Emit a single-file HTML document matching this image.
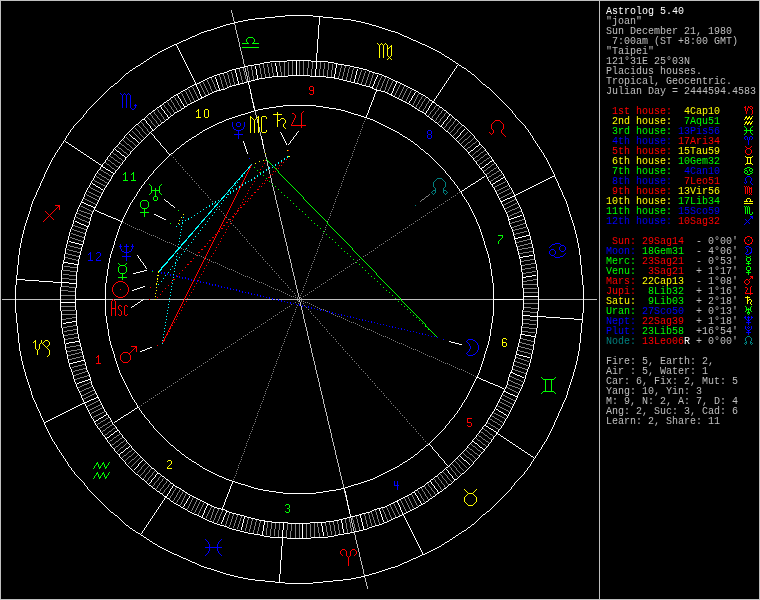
<!DOCTYPE html>
<html><head><meta charset="utf-8"><title>Astrolog 5.40</title>
<style>
html,body{margin:0;padding:0;background:#000;}
body{width:760px;height:600px;position:relative;overflow:hidden;font-family:"Liberation Mono",monospace;}
#side{will-change:transform;position:absolute;left:606px;top:7px;width:155px;font-family:"Liberation Mono",monospace;font-size:10px;line-height:10px;color:#bfbfbf;}
#side div{height:10px;white-space:pre;}
.w{color:#fff}.l{color:#bfbfbf}.r{color:#f00}.G{color:#0f0}.y{color:#ff0}.b{color:#00f}.c{color:#0ff}.C{color:#007f7f}
</style></head><body>
<svg width="760" height="600" viewBox="0 0 760 600" shape-rendering="crispEdges" style="position:absolute;left:0;top:0">
<path stroke="rgb(191,191,191)" stroke-width="1" fill="none" transform="translate(0,0.5)" d="M0 0h760M0 1h1M599 1h1M759 1h1M0 2h1M599 2h1M759 2h1M0 3h1M599 3h1M759 3h1M0 4h1M599 4h1M759 4h1M0 5h1M599 5h1M759 5h1M0 6h1M599 6h1M759 6h1M0 7h1M599 7h1M759 7h1M0 8h1M599 8h1M759 8h1M0 9h1M599 9h1M759 9h1M0 10h1M231 10h1M599 10h1M759 10h1M0 11h1M231 11h1M599 11h1M759 11h1M0 12h1M231 12h1M599 12h1M759 12h1M0 13h1M232 13h1M599 13h1M759 13h1M0 14h1M232 14h1M599 14h1M759 14h1M0 15h1M232 15h1M599 15h1M759 15h1M0 16h1M232 16h1M599 16h1M759 16h1M0 17h1M233 17h1M599 17h1M759 17h1M0 18h1M233 18h1M599 18h1M759 18h1M0 19h1M233 19h1M599 19h1M759 19h1M0 20h1M233 20h1M599 20h1M759 20h1M0 21h1M234 21h1M599 21h1M759 21h1M0 22h1M599 22h1M759 22h1M0 23h1M234 23h1M599 23h1M759 23h1M0 24h1M234 24h1M599 24h1M759 24h1M0 25h1M235 25h1M599 25h1M759 25h1M0 26h1M235 26h1M599 26h1M759 26h1M0 27h1M235 27h1M599 27h1M759 27h1M0 28h1M235 28h1M599 28h1M759 28h1M0 29h1M235 29h1M599 29h1M759 29h1M0 30h1M236 30h1M599 30h1M759 30h1M0 31h1M236 31h1M599 31h1M759 31h1M0 32h1M236 32h1M599 32h1M759 32h1M0 33h1M236 33h1M599 33h1M759 33h1M0 34h1M237 34h1M599 34h1M759 34h1M0 35h1M237 35h1M599 35h1M759 35h1M0 36h1M237 36h1M599 36h1M759 36h1M0 37h1M237 37h1M599 37h1M759 37h1M0 38h1M238 38h1M599 38h1M759 38h1M0 39h1M238 39h1M599 39h1M759 39h1M0 40h1M238 40h1M599 40h1M759 40h1M0 41h1M238 41h1M599 41h1M759 41h1M0 42h1M239 42h1M599 42h1M759 42h1M0 43h1M239 43h1M599 43h1M759 43h1M0 44h1M239 44h1M599 44h1M759 44h1M0 45h1M239 45h1M599 45h1M759 45h1M0 46h1M239 46h1M599 46h1M759 46h1M0 47h1M240 47h1M599 47h1M759 47h1M0 48h1M240 48h1M599 48h1M759 48h1M0 49h1M240 49h1M599 49h1M759 49h1M0 50h1M240 50h1M599 50h1M759 50h1M0 51h1M241 51h1M599 51h1M759 51h1M0 52h1M241 52h1M599 52h1M759 52h1M0 53h1M241 53h1M599 53h1M759 53h1M0 54h1M241 54h1M599 54h1M759 54h1M0 55h1M242 55h1M599 55h1M759 55h1M0 56h1M242 56h1M599 56h1M759 56h1M0 57h1M242 57h1M599 57h1M759 57h1M0 58h1M242 58h1M599 58h1M759 58h1M0 59h1M243 59h1M599 59h1M759 59h1M0 60h1M243 60h1M599 60h1M759 60h1M0 61h1M243 61h1M599 61h1M759 61h1M0 62h1M243 62h1M599 62h1M759 62h1M0 63h1M243 63h1M599 63h1M759 63h1M0 64h1M244 64h1M599 64h1M759 64h1M0 65h1M244 65h1M599 65h1M759 65h1M0 66h1M599 66h1M759 66h1M0 67h1M244 67h1M599 67h1M759 67h1M0 68h1M245 68h1M599 68h1M759 68h1M0 69h1M245 69h1M599 69h1M759 69h1M0 70h1M245 70h1M599 70h1M759 70h1M0 71h1M245 71h1M599 71h1M759 71h1M0 72h1M246 72h1M599 72h1M759 72h1M0 73h1M246 73h1M599 73h1M759 73h1M0 74h1M246 74h1M599 74h1M759 74h1M0 75h1M246 75h1M599 75h1M759 75h1M0 76h1M247 76h1M599 76h1M759 76h1M0 77h1M247 77h1M599 77h1M759 77h1M0 78h1M247 78h1M599 78h1M759 78h1M0 79h1M247 79h1M599 79h1M759 79h1M0 80h1M247 80h1M599 80h1M759 80h1M0 81h1M599 81h1M759 81h1M0 82h1M599 82h1M759 82h1M0 83h1M599 83h1M759 83h1M0 84h1M599 84h1M759 84h1M0 85h1M599 85h1M759 85h1M0 86h1M599 86h1M759 86h1M0 87h1M599 87h1M759 87h1M0 88h1M599 88h1M759 88h1M0 89h1M599 89h1M759 89h1M0 90h1M599 90h1M759 90h1M0 91h1M599 91h1M759 91h1M0 92h1M599 92h1M759 92h1M0 93h1M251 93h1M599 93h1M759 93h1M0 94h1M599 94h1M759 94h1M0 95h1M599 95h1M759 95h1M0 96h1M599 96h1M759 96h1M0 97h1M599 97h1M759 97h1M0 98h1M252 98h1M599 98h1M759 98h1M0 99h1M599 99h1M759 99h1M0 100h1M599 100h1M759 100h1M0 101h1M599 101h1M759 101h1M0 102h1M253 102h1M599 102h1M759 102h1M0 103h1M599 103h1M759 103h1M0 104h1M599 104h1M759 104h1M0 105h1M599 105h1M759 105h1M0 106h1M254 106h1M599 106h1M759 106h1M0 107h1M254 107h1M599 107h1M759 107h1M0 108h1M599 108h1M759 108h1M0 109h1M599 109h1M759 109h1M0 110h1M599 110h1M759 110h1M0 111h1M255 111h1M599 111h1M759 111h1M0 112h1M255 112h1M599 112h1M759 112h1M0 113h1M255 113h1M599 113h1M759 113h1M0 114h1M255 114h1M599 114h1M759 114h1M0 115h1M256 115h1M599 115h1M759 115h1M0 116h1M256 116h1M599 116h1M759 116h1M0 117h1M256 117h1M599 117h1M759 117h1M0 118h1M599 118h1M759 118h1M0 119h1M257 119h1M599 119h1M759 119h1M0 120h1M257 120h1M599 120h1M759 120h1M0 121h1M257 121h1M599 121h1M759 121h1M0 122h1M257 122h1M599 122h1M759 122h1M0 123h1M599 123h1M759 123h1M0 124h1M599 124h1M759 124h1M0 125h1M599 125h1M759 125h1M0 126h1M599 126h1M759 126h1M0 127h1M259 127h1M599 127h1M759 127h1M0 128h1M259 128h1M599 128h1M759 128h1M0 129h1M259 129h1M599 129h1M759 129h1M0 130h1M259 130h1M599 130h1M759 130h1M0 131h1M259 131h1M599 131h1M759 131h1M0 132h1M260 132h1M599 132h1M759 132h1M0 133h1M260 133h1M599 133h1M759 133h1M0 134h1M260 134h1M599 134h1M759 134h1M0 135h1M260 135h1M599 135h1M759 135h1M0 136h1M599 136h1M759 136h1M0 137h1M599 137h1M759 137h1M0 138h1M599 138h1M759 138h1M0 139h1M261 139h1M599 139h1M759 139h1M0 140h1M599 140h1M759 140h1M0 141h1M599 141h1M759 141h1M0 142h1M599 142h1M759 142h1M0 143h1M599 143h1M759 143h1M0 144h1M263 144h1M599 144h1M759 144h1M0 145h1M599 145h1M759 145h1M0 146h1M599 146h1M759 146h1M0 147h1M599 147h1M759 147h1M0 148h1M599 148h1M759 148h1M0 149h1M264 149h1M599 149h1M759 149h1M0 150h1M264 150h1M599 150h1M759 150h1M0 151h1M264 151h1M599 151h1M759 151h1M0 152h1M264 152h1M599 152h1M759 152h1M0 153h1M599 153h1M759 153h1M0 154h1M265 154h1M599 154h1M759 154h1M0 155h1M265 155h1M599 155h1M759 155h1M0 156h1M265 156h1M599 156h1M759 156h1M0 157h1M266 157h1M599 157h1M759 157h1M0 158h1M266 158h1M599 158h1M759 158h1M0 159h1M599 159h1M759 159h1M0 160h1M266 160h1M599 160h1M759 160h1M0 161h1M267 161h1M599 161h1M759 161h1M0 162h1M267 162h1M599 162h1M759 162h1M0 163h1M267 163h1M599 163h1M759 163h1M0 164h1M267 164h1M599 164h1M759 164h1M0 165h1M267 165h1M599 165h1M759 165h1M0 166h1M268 166h1M599 166h1M759 166h1M0 167h1M268 167h1M599 167h1M759 167h1M0 168h1M268 168h1M599 168h1M759 168h1M0 169h1M268 169h1M599 169h1M759 169h1M0 170h1M269 170h1M599 170h1M759 170h1M0 171h1M269 171h1M599 171h1M759 171h1M0 172h1M269 172h1M599 172h1M759 172h1M0 173h1M269 173h1M599 173h1M759 173h1M0 174h1M599 174h1M759 174h1M0 175h1M270 175h1M599 175h1M759 175h1M0 176h1M270 176h1M599 176h1M759 176h1M0 177h1M270 177h1M599 177h1M759 177h1M0 178h1M271 178h1M599 178h1M759 178h1M0 179h1M271 179h1M599 179h1M759 179h1M0 180h1M271 180h1M599 180h1M759 180h1M0 181h1M271 181h1M599 181h1M759 181h1M0 182h1M271 182h1M599 182h1M759 182h1M0 183h1M272 183h1M599 183h1M759 183h1M0 184h1M599 184h1M759 184h1M0 185h1M272 185h1M599 185h1M759 185h1M0 186h1M272 186h1M599 186h1M759 186h1M0 187h1M273 187h1M599 187h1M759 187h1M0 188h1M273 188h1M599 188h1M759 188h1M0 189h1M273 189h1M599 189h1M759 189h1M0 190h1M273 190h1M599 190h1M759 190h1M0 191h1M274 191h1M599 191h1M759 191h1M0 192h1M274 192h1M599 192h1M759 192h1M0 193h1M274 193h1M599 193h1M759 193h1M0 194h1M274 194h1M599 194h1M759 194h1M0 195h1M275 195h1M599 195h1M759 195h1M0 196h1M275 196h1M599 196h1M759 196h1M0 197h1M275 197h1M599 197h1M759 197h1M0 198h1M275 198h1M599 198h1M759 198h1M0 199h1M275 199h1M599 199h1M759 199h1M0 200h1M276 200h1M599 200h1M759 200h1M0 201h1M276 201h1M599 201h1M759 201h1M0 202h1M276 202h1M599 202h1M759 202h1M0 203h1M276 203h1M599 203h1M759 203h1M0 204h1M277 204h1M599 204h1M759 204h1M0 205h1M277 205h1M599 205h1M759 205h1M0 206h1M277 206h1M599 206h1M759 206h1M0 207h1M277 207h1M599 207h1M759 207h1M0 208h1M278 208h1M599 208h1M759 208h1M0 209h1M278 209h1M599 209h1M759 209h1M0 210h1M278 210h1M599 210h1M759 210h1M0 211h1M278 211h1M599 211h1M759 211h1M0 212h1M279 212h1M599 212h1M759 212h1M0 213h1M279 213h1M599 213h1M759 213h1M0 214h1M279 214h1M599 214h1M759 214h1M0 215h1M279 215h1M599 215h1M759 215h1M0 216h1M279 216h1M599 216h1M759 216h1M0 217h1M280 217h1M599 217h1M759 217h1M0 218h1M280 218h1M599 218h1M759 218h1M0 219h1M280 219h1M599 219h1M759 219h1M0 220h1M280 220h1M599 220h1M759 220h1M0 221h1M281 221h1M599 221h1M759 221h1M0 222h1M281 222h1M599 222h1M759 222h1M0 223h1M281 223h1M599 223h1M759 223h1M0 224h1M281 224h1M599 224h1M759 224h1M0 225h1M282 225h1M599 225h1M759 225h1M0 226h1M282 226h1M599 226h1M759 226h1M0 227h1M282 227h1M599 227h1M759 227h1M0 228h1M282 228h1M599 228h1M759 228h1M0 229h1M283 229h1M599 229h1M759 229h1M0 230h1M283 230h1M599 230h1M759 230h1M0 231h1M283 231h1M599 231h1M759 231h1M0 232h1M283 232h1M599 232h1M759 232h1M0 233h1M283 233h1M599 233h1M759 233h1M0 234h1M284 234h1M599 234h1M759 234h1M0 235h1M284 235h1M599 235h1M759 235h1M0 236h1M284 236h1M599 236h1M759 236h1M0 237h1M284 237h1M599 237h1M759 237h1M0 238h1M285 238h1M599 238h1M759 238h1M0 239h1M285 239h1M599 239h1M759 239h1M0 240h1M285 240h1M599 240h1M759 240h1M0 241h1M285 241h1M599 241h1M759 241h1M0 242h1M286 242h1M599 242h1M759 242h1M0 243h1M286 243h1M599 243h1M759 243h1M0 244h1M286 244h1M599 244h1M759 244h1M0 245h1M286 245h1M599 245h1M759 245h1M0 246h1M287 246h1M599 246h1M759 246h1M0 247h1M287 247h1M599 247h1M759 247h1M0 248h1M287 248h1M599 248h1M759 248h1M0 249h1M287 249h1M599 249h1M759 249h1M0 250h1M287 250h1M599 250h1M759 250h1M0 251h1M288 251h1M599 251h1M759 251h1M0 252h1M288 252h1M599 252h1M759 252h1M0 253h1M288 253h1M599 253h1M759 253h1M0 254h1M288 254h1M599 254h1M759 254h1M0 255h1M289 255h1M599 255h1M759 255h1M0 256h1M289 256h1M599 256h1M759 256h1M0 257h1M289 257h1M599 257h1M759 257h1M0 258h1M289 258h1M599 258h1M759 258h1M0 259h1M290 259h1M599 259h1M759 259h1M0 260h1M290 260h1M599 260h1M759 260h1M0 261h1M290 261h1M599 261h1M759 261h1M0 262h1M290 262h1M599 262h1M759 262h1M0 263h1M291 263h1M599 263h1M759 263h1M0 264h1M291 264h1M599 264h1M759 264h1M0 265h1M291 265h1M599 265h1M759 265h1M0 266h1M291 266h1M599 266h1M759 266h1M0 267h1M291 267h1M599 267h1M759 267h1M0 268h1M292 268h1M599 268h1M759 268h1M0 269h1M292 269h1M599 269h1M759 269h1M0 270h1M292 270h1M599 270h1M759 270h1M0 271h1M292 271h1M599 271h1M759 271h1M0 272h1M293 272h1M599 272h1M759 272h1M0 273h1M293 273h1M599 273h1M759 273h1M0 274h1M293 274h1M599 274h1M759 274h1M0 275h1M293 275h1M599 275h1M759 275h1M0 276h1M294 276h1M599 276h1M759 276h1M0 277h1M294 277h1M599 277h1M759 277h1M0 278h1M294 278h1M599 278h1M759 278h1M0 279h1M294 279h1M599 279h1M759 279h1M0 280h1M295 280h1M599 280h1M759 280h1M0 281h1M295 281h1M599 281h1M759 281h1M0 282h1M295 282h1M599 282h1M759 282h1M0 283h1M295 283h1M599 283h1M759 283h1M0 284h1M295 284h1M599 284h1M759 284h1M0 285h1M296 285h1M599 285h1M759 285h1M0 286h1M296 286h1M599 286h1M759 286h1M0 287h1M296 287h1M599 287h1M759 287h1M0 288h1M296 288h1M599 288h1M759 288h1M0 289h1M297 289h1M599 289h1M759 289h1M0 290h1M297 290h1M599 290h1M759 290h1M0 291h1M297 291h1M599 291h1M759 291h1M0 292h1M297 292h1M599 292h1M759 292h1M0 293h1M298 293h1M599 293h1M759 293h1M0 294h1M298 294h1M599 294h1M759 294h1M0 295h1M298 295h1M599 295h1M759 295h1M0 296h1M298 296h1M599 296h1M759 296h1M0 297h1M299 297h1M599 297h1M759 297h1M0 298h1M299 298h1M599 298h1M759 298h1M0 299h1M2 299h13M16 299h44M106 299h7M114 299h29M144 299h5M150 299h5M156 299h28M185 299h87M273 299h2M276 299h2M279 299h20M300 299h100M401 299h92M539 299h44M584 299h13M599 299h1M759 299h1M0 300h1M299 300h1M599 300h1M759 300h1M0 301h1M299 301h1M599 301h1M759 301h1M0 302h1M300 302h1M599 302h1M759 302h1M0 303h1M300 303h1M599 303h1M759 303h1M0 304h1M300 304h1M599 304h1M759 304h1M0 305h1M300 305h1M599 305h1M759 305h1M0 306h1M301 306h1M599 306h1M759 306h1M0 307h1M301 307h1M599 307h1M759 307h1M0 308h1M301 308h1M599 308h1M759 308h1M0 309h1M301 309h1M599 309h1M759 309h1M0 310h1M302 310h1M599 310h1M759 310h1M0 311h1M302 311h1M599 311h1M759 311h1M0 312h1M302 312h1M599 312h1M759 312h1M0 313h1M302 313h1M599 313h1M759 313h1M0 314h1M303 314h1M599 314h1M759 314h1M0 315h1M303 315h1M599 315h1M759 315h1M0 316h1M303 316h1M599 316h1M759 316h1M0 317h1M303 317h1M599 317h1M759 317h1M0 318h1M303 318h1M599 318h1M759 318h1M0 319h1M304 319h1M599 319h1M759 319h1M0 320h1M304 320h1M599 320h1M759 320h1M0 321h1M304 321h1M599 321h1M759 321h1M0 322h1M304 322h1M599 322h1M759 322h1M0 323h1M305 323h1M599 323h1M759 323h1M0 324h1M305 324h1M599 324h1M759 324h1M0 325h1M305 325h1M599 325h1M759 325h1M0 326h1M305 326h1M599 326h1M759 326h1M0 327h1M306 327h1M599 327h1M759 327h1M0 328h1M306 328h1M599 328h1M759 328h1M0 329h1M306 329h1M599 329h1M759 329h1M0 330h1M306 330h1M599 330h1M759 330h1M0 331h1M307 331h1M599 331h1M759 331h1M0 332h1M307 332h1M599 332h1M759 332h1M0 333h1M307 333h1M599 333h1M759 333h1M0 334h1M307 334h1M599 334h1M759 334h1M0 335h1M307 335h1M599 335h1M759 335h1M0 336h1M308 336h1M599 336h1M759 336h1M0 337h1M308 337h1M599 337h1M759 337h1M0 338h1M308 338h1M599 338h1M759 338h1M0 339h1M308 339h1M599 339h1M759 339h1M0 340h1M309 340h1M599 340h1M759 340h1M0 341h1M309 341h1M599 341h1M759 341h1M0 342h1M309 342h1M599 342h1M759 342h1M0 343h1M309 343h1M599 343h1M759 343h1M0 344h1M310 344h1M599 344h1M759 344h1M0 345h1M310 345h1M599 345h1M759 345h1M0 346h1M310 346h1M599 346h1M759 346h1M0 347h1M310 347h1M599 347h1M759 347h1M0 348h1M311 348h1M599 348h1M759 348h1M0 349h1M311 349h1M599 349h1M759 349h1M0 350h1M311 350h1M599 350h1M759 350h1M0 351h1M311 351h1M599 351h1M759 351h1M0 352h1M311 352h1M599 352h1M759 352h1M0 353h1M312 353h1M599 353h1M759 353h1M0 354h1M312 354h1M599 354h1M759 354h1M0 355h1M312 355h1M599 355h1M759 355h1M0 356h1M312 356h1M599 356h1M759 356h1M0 357h1M313 357h1M599 357h1M759 357h1M0 358h1M313 358h1M599 358h1M759 358h1M0 359h1M313 359h1M599 359h1M759 359h1M0 360h1M313 360h1M599 360h1M759 360h1M0 361h1M314 361h1M599 361h1M759 361h1M0 362h1M314 362h1M599 362h1M759 362h1M0 363h1M314 363h1M599 363h1M759 363h1M0 364h1M314 364h1M599 364h1M759 364h1M0 365h1M315 365h1M599 365h1M759 365h1M0 366h1M315 366h1M599 366h1M759 366h1M0 367h1M315 367h1M599 367h1M759 367h1M0 368h1M315 368h1M599 368h1M759 368h1M0 369h1M315 369h1M599 369h1M759 369h1M0 370h1M316 370h1M599 370h1M759 370h1M0 371h1M316 371h1M599 371h1M759 371h1M0 372h1M316 372h1M599 372h1M759 372h1M0 373h1M316 373h1M599 373h1M759 373h1M0 374h1M317 374h1M599 374h1M759 374h1M0 375h1M317 375h1M599 375h1M759 375h1M0 376h1M317 376h1M599 376h1M759 376h1M0 377h1M317 377h1M599 377h1M759 377h1M0 378h1M318 378h1M599 378h1M759 378h1M0 379h1M318 379h1M599 379h1M759 379h1M0 380h1M318 380h1M599 380h1M759 380h1M0 381h1M318 381h1M599 381h1M759 381h1M0 382h1M319 382h1M599 382h1M759 382h1M0 383h1M319 383h1M599 383h1M759 383h1M0 384h1M319 384h1M599 384h1M759 384h1M0 385h1M319 385h1M599 385h1M759 385h1M0 386h1M319 386h1M599 386h1M759 386h1M0 387h1M320 387h1M599 387h1M759 387h1M0 388h1M320 388h1M599 388h1M759 388h1M0 389h1M320 389h1M599 389h1M759 389h1M0 390h1M320 390h1M599 390h1M759 390h1M0 391h1M321 391h1M599 391h1M759 391h1M0 392h1M321 392h1M599 392h1M759 392h1M0 393h1M321 393h1M599 393h1M759 393h1M0 394h1M321 394h1M599 394h1M759 394h1M0 395h1M322 395h1M599 395h1M759 395h1M0 396h1M322 396h1M599 396h1M759 396h1M0 397h1M322 397h1M599 397h1M759 397h1M0 398h1M322 398h1M599 398h1M759 398h1M0 399h1M323 399h1M599 399h1M759 399h1M0 400h1M323 400h1M599 400h1M759 400h1M0 401h1M323 401h1M599 401h1M759 401h1M0 402h1M323 402h1M599 402h1M759 402h1M0 403h1M323 403h1M599 403h1M759 403h1M0 404h1M324 404h1M599 404h1M759 404h1M0 405h1M324 405h1M599 405h1M759 405h1M0 406h1M324 406h1M599 406h1M759 406h1M0 407h1M324 407h1M599 407h1M759 407h1M0 408h1M325 408h1M599 408h1M759 408h1M0 409h1M325 409h1M599 409h1M759 409h1M0 410h1M325 410h1M599 410h1M759 410h1M0 411h1M325 411h1M599 411h1M759 411h1M0 412h1M326 412h1M599 412h1M759 412h1M0 413h1M326 413h1M599 413h1M759 413h1M0 414h1M326 414h1M599 414h1M759 414h1M0 415h1M326 415h1M599 415h1M759 415h1M0 416h1M327 416h1M599 416h1M759 416h1M0 417h1M327 417h1M599 417h1M759 417h1M0 418h1M327 418h1M599 418h1M759 418h1M0 419h1M327 419h1M599 419h1M759 419h1M0 420h1M327 420h1M599 420h1M759 420h1M0 421h1M328 421h1M599 421h1M759 421h1M0 422h1M328 422h1M599 422h1M759 422h1M0 423h1M328 423h1M599 423h1M759 423h1M0 424h1M328 424h1M599 424h1M759 424h1M0 425h1M329 425h1M599 425h1M759 425h1M0 426h1M329 426h1M599 426h1M759 426h1M0 427h1M329 427h1M599 427h1M759 427h1M0 428h1M329 428h1M599 428h1M759 428h1M0 429h1M330 429h1M599 429h1M759 429h1M0 430h1M330 430h1M599 430h1M759 430h1M0 431h1M330 431h1M599 431h1M759 431h1M0 432h1M330 432h1M599 432h1M759 432h1M0 433h1M331 433h1M599 433h1M759 433h1M0 434h1M331 434h1M599 434h1M759 434h1M0 435h1M331 435h1M599 435h1M759 435h1M0 436h1M331 436h1M599 436h1M759 436h1M0 437h1M331 437h1M599 437h1M759 437h1M0 438h1M332 438h1M599 438h1M759 438h1M0 439h1M332 439h1M599 439h1M759 439h1M0 440h1M332 440h1M599 440h1M759 440h1M0 441h1M332 441h1M599 441h1M759 441h1M0 442h1M333 442h1M599 442h1M759 442h1M0 443h1M333 443h1M599 443h1M759 443h1M0 444h1M333 444h1M599 444h1M759 444h1M0 445h1M333 445h1M599 445h1M759 445h1M0 446h1M334 446h1M599 446h1M759 446h1M0 447h1M334 447h1M599 447h1M759 447h1M0 448h1M334 448h1M599 448h1M759 448h1M0 449h1M334 449h1M599 449h1M759 449h1M0 450h1M335 450h1M599 450h1M759 450h1M0 451h1M335 451h1M599 451h1M759 451h1M0 452h1M335 452h1M599 452h1M759 452h1M0 453h1M335 453h1M599 453h1M759 453h1M0 454h1M335 454h1M599 454h1M759 454h1M0 455h1M336 455h1M599 455h1M759 455h1M0 456h1M336 456h1M599 456h1M759 456h1M0 457h1M336 457h1M599 457h1M759 457h1M0 458h1M336 458h1M599 458h1M759 458h1M0 459h1M337 459h1M599 459h1M759 459h1M0 460h1M337 460h1M599 460h1M759 460h1M0 461h1M337 461h1M599 461h1M759 461h1M0 462h1M337 462h1M599 462h1M759 462h1M0 463h1M338 463h1M599 463h1M759 463h1M0 464h1M338 464h1M599 464h1M759 464h1M0 465h1M338 465h1M599 465h1M759 465h1M0 466h1M338 466h1M599 466h1M759 466h1M0 467h1M339 467h1M599 467h1M759 467h1M0 468h1M339 468h1M599 468h1M759 468h1M0 469h1M339 469h1M599 469h1M759 469h1M0 470h1M339 470h1M599 470h1M759 470h1M0 471h1M339 471h1M599 471h1M759 471h1M0 472h1M340 472h1M599 472h1M759 472h1M0 473h1M340 473h1M599 473h1M759 473h1M0 474h1M340 474h1M599 474h1M759 474h1M0 475h1M340 475h1M599 475h1M759 475h1M0 476h1M341 476h1M599 476h1M759 476h1M0 477h1M341 477h1M599 477h1M759 477h1M0 478h1M341 478h1M599 478h1M759 478h1M0 479h1M341 479h1M599 479h1M759 479h1M0 480h1M342 480h1M599 480h1M759 480h1M0 481h1M342 481h1M599 481h1M759 481h1M0 482h1M342 482h1M599 482h1M759 482h1M0 483h1M342 483h1M599 483h1M759 483h1M0 484h1M343 484h1M599 484h1M759 484h1M0 485h1M343 485h1M599 485h1M759 485h1M0 486h1M343 486h1M599 486h1M759 486h1M0 487h1M343 487h1M599 487h1M759 487h1M0 488h1M599 488h1M759 488h1M0 489h1M599 489h1M759 489h1M0 490h1M599 490h1M759 490h1M0 491h1M344 491h1M599 491h1M759 491h1M0 492h1M344 492h1M599 492h1M759 492h1M0 493h1M599 493h1M759 493h1M0 494h1M599 494h1M759 494h1M0 495h1M345 495h1M599 495h1M759 495h1M0 496h1M345 496h1M599 496h1M759 496h1M0 497h1M599 497h1M759 497h1M0 498h1M599 498h1M759 498h1M0 499h1M599 499h1M759 499h1M0 500h1M346 500h1M599 500h1M759 500h1M0 501h1M599 501h1M759 501h1M0 502h1M599 502h1M759 502h1M0 503h1M599 503h1M759 503h1M0 504h1M599 504h1M759 504h1M0 505h1M347 505h1M599 505h1M759 505h1M0 506h1M599 506h1M759 506h1M0 507h1M599 507h1M759 507h1M0 508h1M599 508h1M759 508h1M0 509h1M348 509h1M599 509h1M759 509h1M0 510h1M599 510h1M759 510h1M0 511h1M599 511h1M759 511h1M0 512h1M599 512h1M759 512h1M0 513h1M599 513h1M759 513h1M0 514h1M599 514h1M759 514h1M0 515h1M599 515h1M759 515h1M0 516h1M599 516h1M759 516h1M0 517h1M599 517h1M759 517h1M0 518h1M351 518h1M599 518h1M759 518h1M0 519h1M351 519h1M599 519h1M759 519h1M0 520h1M351 520h1M599 520h1M759 520h1M0 521h1M351 521h1M599 521h1M759 521h1M0 522h1M351 522h1M599 522h1M759 522h1M0 523h1M352 523h1M599 523h1M759 523h1M0 524h1M352 524h1M599 524h1M759 524h1M0 525h1M352 525h1M599 525h1M759 525h1M0 526h1M352 526h1M599 526h1M759 526h1M0 527h1M353 527h1M599 527h1M759 527h1M0 528h1M353 528h1M599 528h1M759 528h1M0 529h1M353 529h1M599 529h1M759 529h1M0 530h1M353 530h1M599 530h1M759 530h1M0 531h1M599 531h1M759 531h1M0 532h1M354 532h1M599 532h1M759 532h1M0 533h1M354 533h1M599 533h1M759 533h1M0 534h1M354 534h1M599 534h1M759 534h1M0 535h1M355 535h1M599 535h1M759 535h1M0 536h1M355 536h1M599 536h1M759 536h1M0 537h1M355 537h1M599 537h1M759 537h1M0 538h1M355 538h1M599 538h1M759 538h1M0 539h1M355 539h1M599 539h1M759 539h1M0 540h1M356 540h1M599 540h1M759 540h1M0 541h1M356 541h1M599 541h1M759 541h1M0 542h1M356 542h1M599 542h1M759 542h1M0 543h1M356 543h1M599 543h1M759 543h1M0 544h1M357 544h1M599 544h1M759 544h1M0 545h1M357 545h1M599 545h1M759 545h1M0 546h1M357 546h1M599 546h1M759 546h1M0 547h1M357 547h1M599 547h1M759 547h1M0 548h1M358 548h1M599 548h1M759 548h1M0 549h1M358 549h1M599 549h1M759 549h1M0 550h1M358 550h1M599 550h1M759 550h1M0 551h1M358 551h1M599 551h1M759 551h1M0 552h1M359 552h1M599 552h1M759 552h1M0 553h1M359 553h1M599 553h1M759 553h1M0 554h1M359 554h1M599 554h1M759 554h1M0 555h1M359 555h1M599 555h1M759 555h1M0 556h1M359 556h1M599 556h1M759 556h1M0 557h1M360 557h1M599 557h1M759 557h1M0 558h1M360 558h1M599 558h1M759 558h1M0 559h1M360 559h1M599 559h1M759 559h1M0 560h1M360 560h1M599 560h1M759 560h1M0 561h1M361 561h1M599 561h1M759 561h1M0 562h1M361 562h1M599 562h1M759 562h1M0 563h1M361 563h1M599 563h1M759 563h1M0 564h1M361 564h1M599 564h1M759 564h1M0 565h1M362 565h1M599 565h1M759 565h1M0 566h1M362 566h1M599 566h1M759 566h1M0 567h1M362 567h1M599 567h1M759 567h1M0 568h1M362 568h1M599 568h1M759 568h1M0 569h1M363 569h1M599 569h1M759 569h1M0 570h1M363 570h1M599 570h1M759 570h1M0 571h1M363 571h1M599 571h1M759 571h1M0 572h1M363 572h1M599 572h1M759 572h1M0 573h1M363 573h1M599 573h1M759 573h1M0 574h1M364 574h1M599 574h1M759 574h1M0 575h1M364 575h1M599 575h1M759 575h1M0 576h1M599 576h1M759 576h1M0 577h1M364 577h1M599 577h1M759 577h1M0 578h1M365 578h1M599 578h1M759 578h1M0 579h1M365 579h1M599 579h1M759 579h1M0 580h1M365 580h1M599 580h1M759 580h1M0 581h1M365 581h1M599 581h1M759 581h1M0 582h1M366 582h1M599 582h1M759 582h1M0 583h1M366 583h1M599 583h1M759 583h1M0 584h1M366 584h1M599 584h1M759 584h1M0 585h1M366 585h1M599 585h1M759 585h1M0 586h1M367 586h1M599 586h1M759 586h1M0 587h1M367 587h1M599 587h1M759 587h1M0 588h1M367 588h1M599 588h1M759 588h1M0 589h1M599 589h1M759 589h1M0 590h1M599 590h1M759 590h1M0 591h1M599 591h1M759 591h1M0 592h1M599 592h1M759 592h1M0 593h1M599 593h1M759 593h1M0 594h1M599 594h1M759 594h1M0 595h1M599 595h1M759 595h1M0 596h1M599 596h1M759 596h1M0 597h1M599 597h1M759 597h1M0 598h1M599 598h1M759 598h1M0 599h760"/>
<path stroke="rgb(255,255,255)" stroke-width="1" fill="none" transform="translate(0,0.5)" d="M285 15h28M275 16h10M313 16h10M265 17h10M319 17h1M323 17h10M255 18h10M319 18h1M333 18h10M248 19h7M319 19h1M343 19h8M243 20h5M319 20h1M351 20h5M238 21h5M319 21h1M356 21h5M234 22h4M319 22h1M361 22h4M230 23h4M319 23h1M365 23h4M226 24h4M319 24h1M369 24h3M223 25h3M318 25h1M372 25h4M220 26h3M318 26h1M376 26h3M217 27h3M318 27h1M379 27h3M214 28h3M318 28h1M382 28h3M211 29h3M318 29h1M385 29h3M207 30h4M318 30h1M388 30h3M204 31h3M318 31h1M391 31h4M201 32h3M318 32h1M395 32h3M199 33h2M318 33h1M398 33h2M197 34h2M318 34h1M400 34h2M195 35h2M318 35h1M402 35h2M192 36h3M318 36h1M404 36h3M190 37h2M318 37h1M407 37h2M188 38h2M318 38h1M409 38h2M186 39h2M317 39h1M411 39h2M183 40h3M317 40h1M413 40h3M181 41h2M317 41h1M416 41h2M179 42h2M317 42h1M418 42h2M177 43h2M317 43h1M420 43h2M174 44h3M317 44h1M422 44h3M172 45h2M176 45h1M317 45h1M425 45h2M170 46h2M177 46h1M317 46h1M427 46h2M168 47h2M177 47h1M317 47h1M429 47h2M166 48h2M178 48h1M317 48h1M431 48h2M164 49h2M178 49h1M317 49h1M433 49h2M162 50h2M179 50h1M317 50h1M435 50h2M160 51h2M179 51h1M317 51h1M437 51h2M158 52h2M180 52h1M317 52h1M439 52h2M157 53h1M180 53h1M316 53h1M441 53h1M155 54h2M181 54h1M316 54h1M442 54h2M153 55h2M181 55h1M316 55h1M444 55h1M152 56h1M182 56h1M316 56h1M445 56h2M150 57h2M182 57h1M316 57h1M447 57h2M149 58h1M183 58h1M316 58h1M449 58h1M147 59h2M183 59h1M316 59h1M450 59h2M146 60h1M184 60h1M287 60h24M316 60h1M452 60h1M144 61h2M184 61h1M270 61h17M296 61h1M311 61h17M453 61h2M143 62h1M185 62h1M264 62h6M296 62h1M316 62h1M328 62h6M455 62h1M141 63h2M185 63h1M260 63h4M275 63h1M296 63h1M316 63h1M334 63h4M456 63h2M140 64h1M186 64h1M254 64h6M275 64h1M296 64h1M316 64h1M336 64h1M338 64h6M458 64h1M138 65h2M186 65h1M248 65h6M275 65h1M296 65h1M316 65h1M336 65h1M344 65h6M457 65h1M459 65h2M136 66h2M187 66h1M244 66h4M255 66h1M276 66h1M296 66h1M316 66h1M336 66h1M350 66h4M456 66h1M461 66h1M135 67h1M187 67h1M240 67h4M255 67h1M276 67h1M296 67h1M316 67h1M336 67h1M354 67h5M456 67h1M462 67h2M133 68h2M188 68h1M236 68h4M255 68h1M276 68h1M296 68h1M316 68h1M335 68h1M359 68h4M455 68h1M464 68h2M132 69h1M188 69h1M232 69h4M256 69h1M276 69h1M296 69h1M315 69h1M335 69h1M357 69h1M363 69h4M454 69h1M466 69h1M130 70h2M189 70h1M229 70h3M235 70h1M256 70h1M276 70h1M296 70h1M315 70h1M335 70h1M357 70h1M367 70h2M454 70h1M467 70h1M129 71h1M189 71h1M227 71h2M235 71h1M256 71h1M276 71h1M296 71h1M315 71h1M335 71h1M356 71h1M369 71h3M453 71h1M468 71h2M128 72h1M190 72h1M224 72h3M235 72h1M256 72h1M277 72h1M296 72h1M315 72h1M335 72h1M356 72h1M372 72h3M452 72h1M470 72h1M126 73h2M190 73h1M220 73h4M236 73h1M256 73h1M277 73h1M296 73h1M315 73h1M335 73h1M356 73h1M375 73h4M452 73h1M471 73h1M125 74h1M191 74h1M217 74h3M236 74h1M256 74h1M277 74h1M296 74h1M315 74h1M334 74h1M356 74h1M379 74h3M451 74h1M472 74h2M124 75h1M191 75h1M214 75h3M236 75h1M257 75h1M277 75h1M288 75h22M315 75h1M334 75h1M355 75h1M377 75h1M382 75h2M450 75h1M474 75h1M123 76h1M192 76h1M212 76h2M236 76h1M257 76h1M272 76h16M310 76h16M334 76h1M355 76h1M377 76h1M384 76h3M450 76h1M475 76h1M122 77h1M192 77h1M209 77h3M215 77h1M237 77h1M257 77h1M265 77h7M326 77h9M355 77h1M376 77h1M387 77h2M449 77h1M476 77h1M121 78h1M193 78h1M207 78h2M215 78h1M237 78h1M257 78h1M259 78h6M334 78h5M355 78h1M376 78h1M389 78h2M448 78h1M477 78h1M120 79h1M193 79h1M205 79h2M216 79h1M237 79h1M255 79h4M339 79h4M354 79h1M375 79h1M391 79h2M448 79h1M478 79h1M119 80h1M194 80h1M203 80h2M216 80h1M237 80h1M251 80h4M343 80h4M354 80h1M375 80h1M393 80h2M447 80h1M479 80h1M118 81h1M194 81h1M201 81h2M216 81h1M238 81h1M247 81h4M347 81h4M354 81h1M374 81h1M395 81h3M446 81h1M480 81h1M117 82h1M195 82h1M199 82h2M217 82h1M238 82h1M244 82h3M248 82h1M351 82h4M374 82h1M396 82h1M398 82h2M446 82h1M481 82h1M115 83h2M195 83h1M197 83h2M217 83h1M238 83h1M240 83h4M248 83h1M355 83h4M374 83h1M396 83h1M400 83h2M445 83h1M482 83h1M114 84h1M194 84h3M217 84h1M236 84h4M248 84h1M359 84h3M373 84h1M395 84h1M402 84h2M444 84h1M483 84h2M113 85h1M192 85h2M196 85h1M218 85h1M232 85h4M249 85h1M362 85h4M373 85h1M395 85h1M404 85h2M444 85h1M485 85h1M111 86h2M190 86h2M196 86h1M218 86h1M229 86h3M249 86h1M366 86h4M372 86h1M394 86h1M406 86h2M443 86h1M486 86h1M110 87h1M188 87h2M197 87h1M218 87h1M227 87h2M249 87h1M370 87h3M394 87h1M408 87h2M442 87h1M487 87h2M109 88h1M187 88h1M197 88h1M219 88h1M225 88h2M249 88h1M372 88h2M393 88h1M410 88h2M442 88h1M489 88h1M108 89h1M185 89h2M198 89h1M219 89h1M221 89h4M250 89h1M374 89h3M393 89h1M412 89h2M441 89h1M490 89h1M107 90h1M183 90h2M198 90h1M217 90h4M250 90h1M376 90h5M393 90h1M414 90h2M440 90h1M491 90h1M106 91h1M181 91h2M199 91h1M214 91h3M250 91h1M376 91h1M381 91h4M392 91h1M416 91h2M440 91h1M492 91h1M105 92h1M180 92h1M199 92h1M212 92h2M250 92h1M375 92h1M385 92h2M392 92h1M415 92h1M418 92h1M439 92h1M493 92h1M104 93h1M178 93h2M199 93h1M210 93h2M250 93h1M375 93h1M387 93h2M391 93h1M414 93h1M419 93h2M438 93h1M494 93h1M103 94h1M176 94h2M200 94h1M208 94h2M251 94h1M374 94h1M389 94h3M414 94h1M421 94h2M438 94h1M495 94h1M102 95h1M174 95h2M177 95h1M200 95h1M206 95h2M251 95h1M374 95h1M391 95h2M413 95h1M423 95h2M437 95h1M496 95h1M101 96h1M173 96h1M178 96h1M201 96h1M204 96h2M251 96h1M374 96h1M393 96h2M412 96h1M425 96h1M436 96h1M497 96h1M100 97h1M171 97h2M178 97h1M201 97h3M251 97h1M373 97h1M395 97h2M412 97h1M426 97h2M436 97h1M498 97h1M99 98h1M170 98h1M179 98h1M200 98h2M251 98h1M373 98h1M397 98h2M411 98h1M428 98h1M435 98h1M499 98h1M98 99h1M169 99h1M180 99h1M198 99h2M252 99h1M373 99h1M399 99h2M411 99h1M429 99h1M434 99h1M500 99h1M97 100h1M167 100h2M180 100h1M196 100h2M252 100h1M372 100h1M401 100h2M410 100h1M430 100h2M434 100h1M501 100h1M96 101h1M166 101h1M181 101h1M194 101h2M252 101h1M372 101h1M403 101h2M409 101h1M432 101h2M502 101h1M95 102h1M164 102h2M181 102h1M192 102h2M252 102h1M371 102h1M405 102h2M409 102h1M432 102h3M503 102h1M94 103h1M163 103h1M182 103h1M190 103h2M253 103h1M371 103h1M407 103h2M431 103h1M435 103h1M504 103h1M93 104h1M162 104h1M183 104h1M188 104h2M253 104h1M371 104h1M409 104h2M431 104h1M436 104h1M505 104h1M92 105h1M160 105h2M183 105h1M187 105h1M253 105h1M283 105h33M370 105h1M411 105h1M430 105h1M437 105h2M506 105h1M91 106h1M159 106h2M184 106h3M253 106h1M276 106h7M316 106h7M370 106h1M412 106h2M429 106h1M439 106h1M507 106h1M90 107h1M157 107h2M161 107h1M184 107h1M253 107h1M269 107h7M323 107h6M369 107h1M414 107h1M429 107h1M440 107h2M508 107h1M89 108h1M156 108h1M161 108h1M182 108h2M254 108h1M263 108h6M329 108h7M369 108h1M415 108h2M428 108h1M442 108h1M509 108h1M88 109h1M155 109h1M162 109h1M181 109h1M254 109h1M258 109h5M336 109h5M369 109h1M417 109h1M428 109h1M443 109h1M510 109h1M87 110h1M153 110h2M163 110h1M179 110h2M254 110h4M341 110h4M368 110h1M418 110h2M427 110h1M444 110h2M511 110h1M86 111h1M152 111h1M164 111h1M177 111h2M251 111h3M345 111h3M368 111h1M420 111h2M426 111h1M446 111h1M512 111h1M86 112h1M151 112h1M164 112h1M175 112h2M248 112h3M348 112h3M368 112h1M422 112h2M426 112h1M447 112h1M512 112h1M85 113h1M149 113h2M165 113h1M174 113h1M245 113h3M351 113h3M367 113h1M424 113h2M448 113h1M513 113h1M84 114h1M148 114h1M166 114h1M173 114h1M241 114h4M354 114h4M367 114h1M425 114h1M449 114h2M514 114h1M83 115h1M147 115h1M167 115h1M171 115h2M238 115h3M358 115h3M366 115h1M426 115h1M449 115h1M451 115h1M515 115h1M83 116h1M146 116h1M167 116h1M170 116h1M235 116h3M361 116h3M366 116h1M427 116h2M448 116h1M452 116h1M515 116h1M82 117h1M145 117h1M168 117h2M232 117h3M364 117h3M429 117h1M447 117h1M453 117h1M516 117h1M81 118h1M144 118h1M168 118h1M229 118h3M367 118h3M430 118h1M447 118h1M454 118h1M517 118h1M80 119h1M142 119h3M166 119h2M226 119h3M370 119h3M431 119h2M446 119h1M455 119h2M518 119h1M79 120h1M141 120h1M145 120h1M165 120h1M224 120h2M373 120h2M433 120h1M445 120h1M457 120h1M519 120h1M78 121h1M140 121h1M146 121h1M164 121h1M222 121h2M375 121h2M434 121h1M444 121h1M458 121h1M520 121h1M77 122h1M139 122h1M146 122h1M162 122h2M219 122h3M377 122h2M435 122h2M443 122h1M459 122h1M521 122h1M76 123h1M138 123h1M147 123h1M161 123h1M217 123h2M379 123h2M437 123h1M443 123h1M460 123h1M522 123h1M75 124h1M136 124h2M148 124h1M160 124h1M215 124h2M381 124h2M438 124h1M442 124h1M461 124h1M523 124h1M74 125h1M135 125h1M149 125h1M158 125h2M213 125h2M383 125h2M439 125h1M441 125h1M462 125h2M524 125h1M73 126h1M134 126h1M150 126h1M157 126h1M211 126h2M385 126h2M440 126h2M464 126h1M525 126h1M73 127h1M133 127h1M150 127h1M156 127h1M209 127h2M387 127h2M442 127h1M465 127h1M525 127h1M72 128h1M132 128h1M151 128h1M155 128h1M207 128h2M389 128h2M443 128h1M466 128h1M526 128h1M71 129h1M131 129h1M152 129h1M154 129h1M205 129h2M391 129h2M444 129h1M464 129h1M467 129h1M527 129h1M70 130h1M130 130h1M152 130h2M203 130h2M393 130h2M445 130h1M463 130h1M468 130h1M528 130h1M70 131h1M129 131h1M151 131h1M202 131h1M298 131h1M395 131h2M446 131h2M462 131h1M469 131h1M528 131h1M69 132h1M128 132h1M150 132h1M200 132h2M280 132h1M297 132h1M397 132h2M448 132h1M461 132h1M470 132h1M529 132h1M68 133h1M127 133h1M149 133h1M151 133h1M199 133h1M281 133h1M296 133h1M399 133h1M449 133h1M460 133h1M471 133h1M530 133h1M68 134h1M126 134h1M129 134h1M148 134h1M152 134h1M197 134h2M281 134h1M296 134h1M400 134h2M450 134h1M460 134h1M472 134h1M530 134h1M67 135h1M125 135h1M130 135h1M147 135h1M153 135h1M196 135h1M282 135h1M295 135h1M402 135h1M451 135h1M459 135h1M473 135h1M531 135h1M66 136h1M124 136h1M131 136h1M146 136h1M154 136h1M194 136h2M261 136h1M282 136h1M294 136h1M403 136h2M452 136h1M458 136h1M474 136h1M532 136h1M66 137h1M124 137h1M132 137h1M145 137h1M154 137h1M192 137h2M261 137h1M283 137h1M293 137h1M405 137h2M453 137h1M457 137h1M474 137h1M532 137h1M65 138h1M123 138h1M133 138h2M144 138h1M155 138h1M191 138h1M261 138h1M283 138h1M293 138h1M407 138h1M454 138h1M456 138h1M475 138h1M533 138h1M65 139h1M122 139h1M135 139h1M143 139h1M156 139h1M189 139h2M262 139h1M284 139h1M292 139h1M408 139h2M455 139h1M476 139h1M533 139h1M64 140h1M121 140h1M136 140h1M142 140h1M157 140h1M188 140h1M262 140h1M284 140h1M291 140h1M410 140h1M456 140h1M477 140h1M534 140h1M63 141h1M65 141h1M120 141h1M137 141h1M141 141h1M158 141h1M186 141h2M243 141h1M262 141h1M285 141h1M290 141h1M411 141h2M457 141h1M478 141h1M535 141h1M63 142h1M66 142h2M119 142h1M138 142h1M140 142h1M159 142h1M185 142h1M243 142h1M262 142h1M285 142h1M290 142h1M413 142h1M458 142h1M479 142h1M535 142h1M62 143h1M68 143h1M119 143h1M139 143h1M160 143h1M184 143h1M244 143h1M262 143h1M286 143h1M289 143h1M414 143h1M459 143h1M479 143h1M536 143h1M61 144h1M69 144h2M118 144h1M138 144h1M160 144h1M182 144h2M244 144h1M262 144h1M286 144h1M288 144h1M415 144h2M460 144h1M479 144h2M537 144h1M61 145h1M71 145h1M117 145h1M137 145h1M161 145h1M181 145h1M244 145h1M263 145h1M417 145h1M461 145h1M478 145h1M481 145h1M537 145h1M60 146h1M72 146h2M116 146h1M136 146h1M162 146h1M180 146h1M245 146h1M263 146h1M418 146h1M462 146h1M476 146h2M482 146h1M538 146h1M59 147h1M74 147h1M115 147h1M135 147h1M163 147h1M179 147h1M245 147h1M263 147h1M419 147h1M463 147h1M475 147h1M483 147h1M539 147h1M59 148h1M75 148h2M114 148h1M134 148h1M164 148h1M177 148h2M245 148h1M263 148h1M420 148h1M464 148h1M474 148h1M484 148h1M539 148h1M58 149h1M77 149h1M113 149h1M115 149h1M133 149h1M165 149h1M176 149h1M246 149h1M421 149h2M465 149h1M473 149h1M485 149h1M540 149h1M57 150h1M78 150h2M113 150h1M116 150h1M132 150h1M166 150h1M175 150h1M246 150h1M423 150h1M466 150h1M471 150h2M485 150h1M541 150h1M57 151h1M80 151h1M112 151h1M117 151h2M131 151h1M166 151h1M174 151h1M246 151h1M424 151h1M467 151h1M470 151h1M486 151h1M541 151h1M56 152h1M81 152h2M111 152h1M119 152h1M130 152h1M167 152h1M173 152h1M247 152h1M425 152h1M468 152h2M487 152h1M542 152h1M55 153h1M83 153h1M110 153h1M120 153h1M130 153h1M168 153h1M171 153h2M247 153h1M426 153h2M468 153h1M488 153h1M543 153h1M55 154h1M84 154h2M110 154h1M121 154h1M129 154h1M169 154h2M428 154h1M469 154h1M488 154h1M543 154h1M54 155h1M86 155h1M109 155h1M122 155h2M128 155h1M169 155h1M429 155h1M470 155h1M489 155h1M544 155h1M54 156h1M87 156h2M108 156h1M124 156h1M127 156h1M168 156h1M430 156h1M471 156h1M490 156h1M544 156h1M53 157h1M89 157h1M107 157h1M125 157h2M167 157h1M431 157h1M472 157h1M491 157h1M545 157h1M52 158h1M90 158h2M107 158h1M125 158h1M166 158h1M432 158h1M473 158h1M491 158h1M546 158h1M52 159h1M92 159h1M106 159h1M125 159h1M165 159h1M433 159h1M473 159h1M492 159h1M546 159h1M51 160h1M93 160h2M105 160h1M124 160h1M164 160h1M434 160h1M474 160h1M492 160h2M547 160h1M51 161h1M95 161h1M105 161h1M123 161h1M163 161h1M435 161h1M475 161h1M490 161h2M493 161h1M547 161h1M50 162h1M96 162h2M104 162h1M122 162h1M162 162h1M436 162h1M476 162h1M489 162h1M494 162h1M548 162h1M50 163h1M98 163h1M103 163h1M122 163h1M161 163h1M437 163h1M476 163h1M488 163h1M495 163h1M548 163h1M49 164h1M99 164h2M102 164h1M121 164h1M160 164h1M438 164h1M477 164h1M486 164h2M496 164h1M549 164h1M49 165h1M101 165h2M120 165h1M159 165h1M439 165h1M478 165h1M485 165h1M496 165h1M549 165h1M48 166h1M101 166h2M119 166h1M158 166h1M440 166h1M479 166h1M484 166h1M497 166h1M550 166h1M48 167h1M100 167h1M103 167h2M119 167h1M157 167h1M441 167h1M479 167h1M482 167h2M498 167h1M550 167h1M47 168h1M100 168h1M105 168h1M118 168h1M156 168h1M442 168h1M480 168h2M498 168h1M551 168h1M47 169h1M99 169h1M106 169h2M117 169h1M155 169h1M443 169h1M481 169h1M499 169h1M551 169h1M46 170h1M98 170h1M108 170h2M116 170h1M154 170h1M444 170h1M482 170h1M500 170h1M552 170h1M46 171h1M97 171h1M110 171h1M115 171h1M153 171h1M445 171h1M483 171h1M501 171h1M552 171h1M45 172h1M97 172h1M111 172h2M115 172h1M153 172h1M445 172h1M483 172h1M501 172h1M553 172h1M45 173h1M96 173h1M113 173h2M152 173h1M446 173h1M484 173h1M502 173h1M553 173h1M44 174h1M95 174h1M113 174h1M151 174h1M447 174h1M485 174h1M503 174h1M554 174h1M44 175h1M95 175h1M112 175h1M150 175h1M448 175h1M486 175h1M503 175h1M554 175h1M44 176h1M94 176h1M112 176h1M149 176h1M449 176h1M484 176h1M486 176h1M504 176h1M552 176h3M43 177h1M94 177h1M111 177h1M148 177h1M450 177h1M482 177h2M487 177h1M503 177h2M550 177h2M555 177h1M43 178h1M93 178h1M111 178h1M148 178h1M450 178h1M481 178h1M487 178h1M501 178h2M505 178h1M548 178h2M555 178h1M42 179h1M93 179h1M110 179h1M147 179h1M451 179h1M479 179h2M488 179h1M500 179h1M505 179h1M546 179h2M556 179h1M42 180h1M92 180h1M110 180h1M146 180h1M452 180h1M478 180h1M488 180h1M498 180h2M506 180h1M544 180h2M556 180h1M41 181h1M91 181h1M109 181h1M145 181h1M453 181h1M476 181h2M489 181h1M496 181h2M507 181h1M542 181h2M557 181h1M41 182h1M91 182h1M108 182h1M144 182h1M454 182h1M475 182h1M490 182h1M495 182h1M507 182h1M540 182h2M557 182h1M40 183h1M90 183h1M92 183h1M108 183h1M144 183h1M454 183h1M473 183h2M490 183h1M493 183h2M508 183h1M538 183h2M558 183h1M40 184h1M90 184h1M93 184h2M107 184h1M143 184h1M455 184h1M471 184h2M491 184h2M508 184h1M536 184h2M558 184h1M40 185h1M89 185h1M95 185h1M106 185h1M142 185h1M456 185h1M470 185h1M492 185h1M509 185h1M534 185h2M558 185h1M39 186h1M89 186h1M96 186h2M106 186h1M141 186h1M457 186h1M468 186h2M492 186h1M509 186h1M532 186h2M559 186h1M39 187h1M88 187h1M98 187h2M105 187h1M141 187h1M457 187h1M467 187h1M493 187h1M510 187h1M530 187h2M559 187h1M38 188h1M87 188h1M100 188h1M104 188h1M140 188h1M458 188h1M465 188h2M494 188h1M511 188h1M528 188h2M560 188h1M38 189h1M87 189h1M101 189h2M104 189h1M139 189h1M459 189h1M464 189h1M494 189h1M511 189h1M526 189h2M560 189h1M37 190h1M86 190h1M103 190h1M139 190h1M459 190h1M462 190h2M495 190h1M512 190h1M524 190h2M561 190h1M37 191h1M86 191h1M103 191h1M138 191h1M460 191h2M495 191h1M512 191h1M522 191h2M561 191h1M36 192h1M85 192h1M102 192h1M137 192h1M461 192h1M496 192h1M513 192h1M520 192h2M562 192h1M36 193h1M85 193h1M102 193h1M137 193h1M461 193h1M496 193h1M513 193h1M518 193h2M562 193h1M36 194h1M84 194h1M101 194h1M136 194h1M462 194h1M497 194h1M514 194h1M516 194h2M562 194h1M35 195h1M84 195h1M101 195h1M136 195h1M462 195h1M497 195h1M514 195h2M563 195h1M35 196h1M84 196h1M100 196h1M135 196h1M463 196h1M498 196h1M512 196h3M563 196h1M34 197h1M83 197h1M100 197h1M134 197h1M464 197h1M498 197h1M510 197h2M515 197h1M564 197h1M34 198h1M83 198h1M99 198h1M134 198h1M464 198h1M499 198h1M507 198h3M515 198h1M564 198h1M33 199h1M82 199h1M99 199h1M133 199h1M164 199h1M465 199h1M499 199h1M505 199h2M516 199h1M565 199h1M33 200h1M82 200h1M98 200h1M132 200h1M165 200h1M466 200h1M500 200h1M503 200h2M516 200h1M565 200h1M32 201h1M81 201h1M98 201h1M132 201h1M166 201h2M466 201h1M500 201h3M517 201h1M566 201h1M32 202h1M81 202h3M97 202h1M131 202h1M168 202h1M467 202h1M501 202h1M517 202h1M566 202h1M32 203h1M80 203h1M84 203h2M97 203h1M130 203h1M169 203h1M468 203h1M501 203h1M518 203h1M566 203h1M31 204h1M80 204h1M86 204h2M96 204h1M130 204h1M170 204h1M468 204h1M502 204h1M518 204h1M567 204h1M31 205h1M79 205h1M88 205h3M96 205h1M129 205h1M171 205h2M469 205h1M502 205h1M519 205h1M567 205h1M31 206h1M79 206h1M91 206h2M95 206h1M129 206h1M173 206h1M469 206h1M503 206h1M519 206h1M567 206h1M30 207h1M78 207h1M93 207h3M128 207h1M174 207h1M470 207h1M503 207h1M520 207h1M568 207h1M30 208h1M78 208h1M94 208h1M128 208h1M470 208h1M504 208h1M520 208h1M568 208h1M30 209h1M77 209h1M94 209h1M127 209h1M471 209h1M504 209h1M521 209h1M568 209h1M30 210h1M77 210h1M93 210h1M95 210h2M127 210h1M471 210h1M505 210h1M521 210h1M568 210h1M29 211h1M77 211h1M93 211h1M97 211h2M126 211h1M472 211h1M505 211h1M521 211h1M569 211h1M29 212h1M76 212h1M92 212h1M99 212h2M126 212h1M472 212h1M506 212h1M522 212h1M569 212h1M29 213h1M76 213h1M92 213h1M101 213h3M125 213h1M473 213h1M506 213h1M522 213h1M569 213h1M28 214h1M75 214h1M91 214h1M104 214h2M125 214h1M154 214h2M473 214h1M507 214h1M523 214h1M570 214h1M28 215h1M75 215h1M91 215h1M106 215h2M124 215h1M156 215h2M474 215h1M507 215h1M520 215h2M523 215h1M570 215h1M28 216h1M75 216h1M91 216h1M108 216h3M124 216h1M158 216h2M474 216h1M507 216h1M517 216h3M523 216h1M570 216h1M27 217h1M74 217h1M90 217h1M111 217h2M123 217h1M160 217h2M475 217h1M508 217h1M514 217h3M524 217h1M571 217h1M27 218h1M74 218h1M90 218h1M113 218h3M123 218h1M162 218h2M475 218h1M508 218h1M511 218h3M524 218h1M571 218h1M27 219h1M74 219h1M90 219h1M116 219h2M122 219h1M164 219h2M476 219h1M508 219h3M524 219h1M571 219h1M26 220h1M73 220h1M90 220h1M118 220h2M122 220h1M476 220h1M508 220h1M525 220h1M572 220h1M26 221h1M73 221h1M75 221h2M89 221h1M120 221h3M476 221h1M509 221h1M525 221h1M572 221h1M26 222h1M73 222h1M77 222h2M89 222h1M121 222h1M477 222h1M509 222h1M525 222h1M572 222h1M25 223h1M73 223h1M79 223h2M89 223h1M121 223h1M477 223h1M509 223h1M525 223h1M573 223h1M25 224h1M72 224h1M81 224h3M89 224h1M120 224h1M478 224h1M509 224h1M526 224h1M573 224h1M25 225h1M72 225h1M84 225h2M88 225h1M120 225h1M478 225h1M510 225h1M526 225h1M573 225h1M24 226h1M72 226h1M86 226h3M119 226h1M479 226h1M510 226h1M526 226h1M574 226h1M24 227h1M71 227h1M87 227h1M119 227h1M479 227h1M511 227h1M527 227h1M574 227h1M24 228h1M71 228h1M87 228h1M119 228h1M479 228h1M511 228h1M527 228h1M574 228h1M24 229h1M70 229h1M86 229h1M118 229h1M480 229h1M512 229h1M528 229h1M574 229h1M23 230h1M70 230h1M86 230h1M118 230h1M480 230h1M512 230h1M528 230h1M575 230h1M23 231h1M70 231h1M86 231h1M118 231h1M480 231h1M512 231h1M528 231h1M575 231h1M23 232h1M69 232h1M85 232h1M117 232h1M481 232h1M513 232h1M529 232h1M575 232h1M23 233h1M69 233h1M85 233h1M117 233h1M481 233h1M513 233h1M529 233h1M575 233h1M22 234h1M69 234h1M85 234h1M117 234h1M481 234h1M513 234h1M529 234h1M576 234h1M22 235h1M69 235h1M85 235h1M116 235h1M482 235h1M513 235h1M526 235h4M576 235h1M22 236h1M68 236h1M84 236h1M116 236h1M482 236h1M514 236h1M522 236h4M530 236h1M576 236h1M22 237h1M68 237h1M84 237h1M116 237h1M482 237h1M514 237h1M518 237h4M530 237h1M576 237h1M21 238h1M68 238h1M84 238h1M115 238h1M483 238h1M514 238h4M530 238h1M577 238h1M21 239h1M68 239h1M84 239h1M115 239h1M483 239h1M514 239h1M530 239h1M577 239h1M21 240h1M67 240h1M83 240h1M115 240h1M483 240h1M515 240h1M531 240h1M577 240h1M21 241h1M67 241h1M69 241h2M83 241h1M114 241h1M484 241h1M515 241h1M531 241h1M577 241h1M21 242h1M67 242h1M71 242h4M83 242h1M114 242h1M484 242h1M515 242h1M531 242h1M577 242h1M20 243h1M67 243h1M75 243h4M83 243h1M114 243h1M484 243h1M515 243h1M531 243h1M578 243h1M20 244h1M66 244h1M79 244h4M114 244h1M484 244h1M516 244h1M532 244h1M578 244h1M20 245h1M66 245h1M82 245h1M113 245h1M485 245h1M516 245h1M532 245h1M578 245h1M20 246h1M66 246h1M82 246h1M113 246h1M485 246h1M516 246h1M532 246h1M578 246h1M20 247h1M66 247h1M81 247h1M113 247h1M485 247h1M517 247h1M532 247h1M578 247h1M19 248h1M65 248h1M81 248h1M112 248h1M486 248h1M517 248h1M533 248h1M579 248h1M19 249h1M65 249h1M81 249h1M112 249h1M486 249h1M517 249h1M533 249h1M579 249h1M19 250h1M65 250h1M81 250h1M112 250h1M486 250h1M517 250h1M533 250h1M579 250h1M19 251h1M65 251h1M80 251h1M111 251h1M487 251h1M518 251h1M533 251h1M579 251h1M19 252h1M65 252h1M80 252h1M111 252h1M487 252h1M518 252h1M533 252h1M579 252h1M19 253h1M65 253h1M80 253h1M111 253h1M487 253h1M518 253h1M533 253h1M579 253h1M19 254h1M64 254h1M80 254h1M110 254h1M488 254h1M518 254h1M534 254h1M579 254h1M18 255h1M64 255h1M79 255h1M110 255h1M137 255h1M488 255h1M519 255h1M529 255h4M534 255h1M580 255h1M18 256h1M64 256h1M79 256h1M110 256h1M138 256h1M488 256h1M519 256h1M523 256h6M534 256h1M580 256h1M18 257h1M64 257h1M79 257h1M110 257h1M138 257h1M488 257h1M519 257h4M534 257h1M580 257h1M18 258h1M64 258h1M79 258h1M109 258h1M139 258h1M489 258h1M519 258h1M534 258h1M580 258h1M18 259h1M64 259h1M78 259h1M109 259h1M140 259h1M489 259h1M520 259h1M534 259h1M580 259h1M18 260h1M63 260h1M78 260h1M109 260h1M140 260h1M489 260h1M520 260h1M535 260h1M580 260h1M18 261h1M63 261h1M78 261h1M109 261h1M141 261h1M489 261h1M520 261h1M535 261h1M580 261h1M18 262h1M63 262h5M78 262h1M109 262h1M142 262h1M489 262h1M520 262h1M535 262h1M580 262h1M18 263h1M63 263h1M68 263h6M78 263h1M108 263h1M143 263h1M490 263h1M520 263h1M535 263h1M580 263h1M18 264h1M62 264h1M74 264h5M108 264h1M143 264h1M490 264h1M520 264h1M536 264h1M580 264h1M17 265h1M62 265h1M77 265h1M108 265h1M144 265h1M490 265h1M521 265h1M536 265h1M581 265h1M17 266h1M62 266h1M77 266h1M108 266h1M145 266h1M490 266h1M521 266h1M536 266h1M581 266h1M17 267h1M62 267h1M77 267h1M108 267h1M145 267h1M490 267h1M521 267h1M536 267h1M581 267h1M17 268h1M62 268h1M77 268h1M108 268h1M146 268h1M490 268h1M521 268h1M536 268h1M581 268h1M17 269h1M62 269h1M77 269h1M107 269h1M491 269h1M521 269h1M536 269h1M581 269h1M17 270h1M61 270h1M77 270h1M107 270h1M144 270h3M491 270h1M521 270h1M537 270h1M581 270h1M17 271h1M61 271h1M77 271h1M107 271h1M140 271h4M491 271h1M521 271h1M537 271h1M581 271h1M17 272h1M61 272h1M76 272h1M107 272h1M136 272h4M491 272h1M522 272h1M537 272h1M581 272h1M17 273h1M61 273h1M76 273h1M107 273h1M133 273h3M491 273h1M522 273h1M537 273h1M581 273h1M17 274h1M61 274h1M76 274h1M107 274h1M491 274h1M522 274h1M537 274h1M581 274h1M16 275h1M61 275h1M76 275h1M107 275h1M491 275h1M522 275h1M532 275h4M537 275h1M582 275h1M16 276h1M61 276h1M76 276h1M106 276h1M492 276h1M522 276h1M526 276h6M537 276h1M582 276h1M16 277h1M61 277h1M76 277h1M106 277h1M492 277h1M522 277h4M537 277h1M582 277h1M16 278h1M61 278h1M76 278h1M106 278h1M492 278h1M522 278h1M537 278h1M582 278h1M16 279h9M61 279h1M76 279h1M106 279h1M492 279h1M522 279h1M537 279h1M582 279h1M16 280h1M25 280h14M61 280h1M76 280h1M106 280h1M492 280h1M522 280h1M537 280h1M582 280h1M16 281h1M39 281h14M61 281h1M76 281h1M106 281h1M492 281h1M522 281h1M537 281h1M582 281h1M16 282h1M53 282h16M76 282h1M106 282h1M492 282h1M522 282h1M537 282h1M582 282h1M16 283h1M61 283h1M69 283h8M105 283h1M493 283h1M522 283h1M537 283h1M582 283h1M16 284h1M61 284h1M76 284h1M105 284h1M493 284h1M522 284h1M537 284h1M582 284h1M15 285h1M61 285h1M76 285h1M105 285h1M493 285h1M522 285h1M537 285h1M583 285h1M15 286h1M61 286h1M76 286h1M105 286h1M143 286h2M493 286h1M522 286h1M537 286h1M583 286h1M15 287h1M60 287h1M76 287h1M105 287h1M140 287h3M493 287h1M522 287h1M538 287h1M583 287h1M15 288h1M60 288h1M75 288h1M105 288h1M137 288h3M493 288h1M523 288h1M538 288h1M583 288h1M15 289h1M60 289h1M75 289h1M105 289h1M134 289h3M493 289h1M523 289h1M538 289h1M583 289h1M15 290h1M60 290h1M75 290h1M105 290h1M132 290h2M493 290h1M523 290h1M538 290h1M583 290h1M15 291h1M60 291h1M75 291h1M105 291h1M493 291h1M523 291h1M538 291h1M583 291h1M15 292h1M60 292h1M75 292h1M105 292h1M493 292h1M523 292h1M538 292h1M583 292h1M15 293h1M60 293h1M75 293h1M105 293h1M493 293h1M523 293h1M538 293h1M583 293h1M15 294h1M60 294h1M75 294h1M105 294h1M493 294h1M523 294h1M538 294h1M583 294h1M15 295h1M60 295h1M75 295h1M105 295h1M493 295h1M523 295h1M538 295h1M583 295h1M15 296h1M60 296h1M75 296h1M105 296h1M493 296h1M523 296h16M583 296h1M15 297h1M60 297h1M75 297h1M105 297h1M493 297h1M523 297h1M538 297h1M583 297h1M15 298h1M60 298h1M75 298h1M105 298h1M493 298h1M523 298h1M538 298h1M583 298h1M15 299h1M60 299h1M75 299h31M143 299h1M493 299h31M538 299h1M583 299h1M15 300h1M60 300h1M75 300h1M105 300h1M141 300h2M493 300h1M523 300h1M538 300h1M583 300h1M15 301h1M60 301h1M75 301h1M105 301h1M140 301h1M493 301h1M523 301h1M538 301h1M583 301h1M15 302h1M60 302h16M105 302h1M138 302h2M493 302h1M523 302h1M538 302h1M583 302h1M15 303h1M60 303h1M75 303h1M105 303h1M137 303h1M493 303h1M523 303h1M538 303h1M583 303h1M15 304h1M60 304h1M75 304h1M105 304h1M135 304h2M493 304h1M523 304h1M538 304h1M583 304h1M15 305h1M60 305h1M75 305h1M105 305h1M134 305h1M493 305h1M523 305h1M538 305h1M583 305h1M15 306h1M60 306h1M75 306h1M105 306h1M132 306h2M493 306h1M523 306h1M538 306h1M583 306h1M15 307h1M60 307h1M75 307h1M105 307h1M131 307h1M493 307h1M523 307h1M538 307h1M583 307h1M15 308h1M60 308h1M75 308h1M105 308h1M493 308h1M523 308h1M538 308h1M583 308h1M15 309h1M60 309h1M75 309h1M105 309h1M493 309h1M523 309h1M538 309h1M583 309h1M15 310h1M60 310h1M76 310h1M105 310h1M493 310h1M522 310h1M538 310h1M583 310h1M15 311h1M61 311h1M76 311h1M105 311h1M493 311h1M522 311h1M537 311h1M583 311h1M15 312h1M61 312h1M76 312h1M105 312h1M493 312h1M522 312h1M537 312h1M583 312h1M16 313h1M61 313h1M76 313h1M105 313h1M493 313h1M522 313h1M537 313h1M582 313h1M16 314h1M61 314h1M76 314h1M105 314h1M493 314h1M522 314h1M537 314h1M582 314h1M16 315h1M61 315h1M76 315h1M105 315h1M493 315h1M522 315h8M537 315h1M582 315h1M16 316h1M61 316h1M76 316h1M106 316h1M492 316h1M522 316h1M530 316h16M582 316h1M16 317h1M61 317h1M76 317h1M106 317h1M492 317h1M522 317h1M537 317h1M546 317h14M582 317h1M16 318h1M61 318h1M76 318h1M106 318h1M492 318h1M522 318h1M537 318h1M560 318h14M582 318h1M16 319h1M61 319h1M76 319h1M106 319h1M492 319h1M522 319h1M537 319h1M574 319h9M16 320h1M61 320h1M76 320h1M106 320h1M492 320h1M522 320h1M537 320h1M582 320h1M16 321h1M61 321h1M72 321h5M106 321h1M492 321h1M522 321h1M537 321h1M582 321h1M16 322h1M61 322h1M66 322h6M76 322h1M106 322h1M492 322h1M522 322h1M537 322h1M582 322h1M17 323h1M61 323h1M63 323h3M76 323h1M107 323h1M491 323h1M522 323h1M537 323h1M581 323h1M17 324h1M61 324h1M76 324h1M107 324h1M491 324h1M522 324h1M537 324h1M581 324h1M17 325h1M61 325h1M76 325h1M107 325h1M491 325h1M522 325h1M537 325h1M581 325h1M17 326h1M61 326h1M77 326h1M107 326h1M491 326h1M521 326h1M537 326h1M581 326h1M17 327h1M61 327h1M77 327h1M107 327h1M491 327h1M521 327h1M537 327h1M581 327h1M17 328h1M62 328h1M77 328h1M107 328h1M491 328h1M521 328h1M536 328h1M581 328h1M17 329h1M62 329h1M77 329h1M108 329h1M490 329h1M521 329h1M536 329h1M581 329h1M17 330h1M62 330h1M77 330h1M108 330h1M490 330h1M521 330h1M536 330h1M581 330h1M17 331h1M62 331h1M77 331h1M108 331h1M490 331h1M521 331h1M536 331h1M581 331h1M17 332h1M62 332h1M77 332h1M108 332h1M490 332h1M521 332h1M536 332h1M581 332h1M18 333h1M62 333h1M77 333h1M108 333h1M490 333h1M521 333h1M536 333h1M580 333h1M18 334h1M63 334h1M78 334h1M108 334h1M490 334h1M520 334h5M535 334h1M580 334h1M18 335h1M63 335h1M78 335h1M108 335h1M490 335h1M520 335h1M525 335h6M535 335h1M580 335h1M18 336h1M63 336h1M78 336h1M109 336h1M489 336h1M520 336h1M531 336h5M580 336h1M18 337h1M63 337h1M78 337h1M109 337h1M489 337h1M520 337h1M535 337h1M580 337h1M18 338h1M64 338h1M78 338h1M109 338h1M489 338h1M520 338h1M534 338h1M580 338h1M18 339h1M64 339h1M79 339h1M109 339h1M489 339h1M519 339h1M534 339h1M580 339h1M18 340h1M64 340h1M79 340h1M109 340h1M489 340h1M519 340h1M534 340h1M580 340h1M18 341h1M64 341h1M75 341h5M110 341h1M449 341h2M488 341h1M519 341h1M534 341h1M580 341h1M18 342h1M64 342h1M69 342h6M79 342h1M110 342h1M451 342h4M488 342h1M519 342h1M534 342h1M580 342h1M19 343h1M64 343h1M66 343h3M80 343h1M110 343h1M455 343h4M488 343h1M518 343h1M534 343h1M579 343h1M19 344h1M65 344h1M80 344h1M110 344h1M459 344h3M488 344h1M518 344h1M533 344h1M579 344h1M19 345h1M65 345h1M80 345h1M111 345h1M487 345h1M518 345h1M533 345h1M579 345h1M19 346h1M65 346h1M80 346h1M111 346h1M487 346h1M518 346h1M533 346h1M579 346h1M19 347h1M65 347h1M81 347h1M111 347h1M150 347h2M487 347h1M517 347h1M533 347h1M579 347h1M19 348h1M65 348h1M81 348h1M112 348h1M147 348h3M486 348h1M517 348h1M533 348h1M579 348h1M19 349h1M65 349h1M81 349h1M112 349h1M145 349h2M486 349h1M517 349h1M533 349h1M579 349h1M19 350h1M66 350h1M81 350h1M112 350h1M142 350h3M486 350h1M517 350h1M532 350h1M579 350h1M20 351h1M66 351h1M82 351h1M113 351h1M140 351h2M485 351h1M516 351h1M532 351h1M578 351h1M20 352h1M66 352h1M82 352h1M113 352h1M485 352h1M516 352h1M532 352h1M578 352h1M20 353h1M66 353h1M82 353h1M113 353h1M485 353h1M516 353h1M532 353h1M578 353h1M20 354h1M67 354h1M82 354h1M114 354h1M484 354h1M516 354h3M531 354h1M578 354h1M20 355h1M67 355h1M83 355h1M114 355h1M484 355h1M515 355h1M519 355h4M531 355h1M578 355h1M21 356h1M67 356h1M83 356h1M114 356h1M484 356h1M515 356h1M523 356h4M531 356h1M577 356h1M21 357h1M67 357h1M83 357h1M114 357h1M484 357h1M515 357h1M527 357h3M531 357h1M577 357h1M21 358h1M67 358h1M83 358h1M115 358h1M483 358h1M515 358h1M531 358h1M577 358h1M21 359h1M68 359h1M84 359h1M115 359h1M483 359h1M514 359h1M530 359h1M577 359h1M21 360h1M68 360h1M81 360h4M115 360h1M483 360h1M514 360h1M530 360h1M577 360h1M22 361h1M68 361h1M77 361h4M84 361h1M116 361h1M482 361h1M514 361h1M530 361h1M576 361h1M22 362h1M68 362h1M73 362h4M85 362h1M116 362h1M482 362h1M513 362h1M530 362h1M576 362h1M22 363h1M69 363h4M85 363h1M116 363h1M482 363h1M513 363h1M529 363h1M576 363h1M22 364h1M69 364h1M85 364h1M117 364h1M481 364h1M513 364h1M529 364h1M576 364h1M23 365h1M69 365h1M85 365h1M117 365h1M481 365h1M513 365h1M529 365h1M575 365h1M23 366h1M69 366h1M86 366h1M117 366h1M481 366h1M512 366h1M529 366h1M575 366h1M23 367h1M70 367h1M86 367h1M118 367h1M480 367h1M512 367h1M528 367h1M575 367h1M23 368h1M70 368h1M86 368h1M118 368h1M480 368h1M512 368h1M528 368h1M575 368h1M24 369h1M71 369h1M86 369h1M118 369h1M480 369h1M512 369h1M527 369h1M574 369h1M24 370h1M71 370h1M87 370h1M119 370h1M479 370h1M511 370h1M527 370h1M574 370h1M24 371h1M71 371h1M87 371h1M119 371h1M479 371h1M511 371h1M527 371h1M574 371h1M25 372h1M72 372h1M88 372h1M119 372h1M479 372h1M510 372h3M526 372h1M573 372h1M25 373h1M72 373h1M88 373h1M120 373h1M478 373h1M510 373h1M513 373h2M526 373h1M573 373h1M25 374h1M72 374h1M89 374h1M120 374h1M478 374h1M509 374h1M515 374h2M526 374h1M573 374h1M25 375h1M73 375h1M89 375h1M121 375h1M477 375h1M509 375h1M517 375h3M525 375h1M573 375h1M26 376h1M73 376h1M89 376h1M121 376h1M477 376h1M509 376h1M520 376h2M525 376h1M572 376h1M26 377h1M73 377h1M90 377h1M122 377h1M476 377h3M508 377h1M522 377h2M525 377h1M572 377h1M26 378h1M73 378h1M90 378h1M122 378h1M476 378h1M479 378h2M508 378h1M525 378h1M572 378h1M27 379h1M74 379h1M88 379h3M123 379h1M475 379h1M481 379h2M508 379h1M524 379h1M571 379h1M27 380h1M74 380h1M85 380h3M90 380h1M123 380h1M475 380h1M483 380h3M508 380h1M524 380h1M571 380h1M27 381h1M74 381h1M82 381h3M91 381h1M124 381h1M474 381h1M486 381h2M507 381h1M524 381h1M571 381h1M28 382h1M75 382h1M79 382h3M91 382h1M124 382h1M474 382h1M488 382h2M507 382h1M523 382h1M570 382h1M28 383h1M75 383h1M77 383h2M91 383h1M125 383h1M473 383h1M490 383h3M507 383h1M523 383h1M570 383h1M28 384h1M76 384h1M91 384h1M125 384h1M473 384h1M493 384h2M507 384h1M522 384h1M570 384h1M29 385h1M76 385h1M92 385h1M126 385h1M472 385h1M495 385h3M506 385h1M522 385h1M569 385h1M29 386h1M76 386h1M92 386h1M126 386h1M472 386h1M498 386h2M506 386h1M522 386h1M569 386h1M29 387h1M77 387h1M93 387h1M127 387h1M471 387h1M500 387h2M505 387h1M521 387h1M569 387h1M30 388h1M77 388h1M93 388h1M127 388h1M471 388h1M502 388h2M505 388h1M521 388h1M568 388h1M30 389h1M78 389h1M94 389h1M128 389h1M470 389h1M504 389h1M520 389h1M568 389h1M30 390h1M78 390h1M94 390h1M128 390h1M470 390h1M504 390h1M520 390h1M568 390h1M31 391h1M79 391h1M95 391h1M129 391h1M469 391h1M503 391h3M519 391h1M567 391h1M31 392h1M79 392h1M95 392h1M129 392h1M469 392h1M503 392h1M506 392h2M519 392h1M567 392h1M31 393h1M80 393h1M96 393h1M130 393h1M468 393h1M502 393h1M508 393h2M518 393h1M567 393h1M31 394h1M80 394h1M96 394h1M130 394h1M468 394h1M502 394h1M510 394h3M518 394h1M567 394h1M32 395h1M81 395h1M97 395h1M131 395h1M467 395h1M501 395h1M513 395h2M517 395h1M566 395h1M32 396h1M81 396h1M97 396h1M131 396h1M467 396h1M501 396h1M515 396h3M566 396h1M32 397h1M81 397h1M96 397h3M132 397h1M466 397h1M500 397h1M517 397h1M566 397h1M33 398h1M82 398h1M94 398h2M98 398h1M132 398h1M466 398h1M500 398h1M516 398h1M565 398h1M33 399h1M82 399h1M91 399h3M99 399h1M133 399h1M465 399h1M499 399h1M516 399h1M565 399h1M34 400h1M83 400h1M89 400h2M99 400h1M134 400h1M464 400h1M499 400h1M515 400h1M564 400h1M34 401h1M83 401h1M87 401h2M100 401h1M134 401h1M464 401h1M498 401h1M515 401h1M564 401h1M35 402h1M84 402h3M100 402h1M135 402h1M463 402h1M498 402h1M514 402h1M563 402h1M35 403h1M82 403h3M101 403h1M136 403h1M462 403h1M497 403h1M514 403h1M563 403h1M36 404h1M80 404h2M85 404h1M101 404h1M136 404h1M462 404h1M497 404h1M513 404h1M562 404h1M36 405h1M78 405h2M85 405h1M102 405h1M137 405h1M461 405h1M496 405h1M513 405h1M562 405h1M36 406h1M76 406h2M86 406h1M102 406h1M137 406h1M461 406h1M496 406h1M512 406h1M562 406h1M37 407h1M74 407h2M86 407h1M103 407h1M137 407h2M460 407h1M495 407h1M512 407h1M561 407h1M37 408h1M72 408h2M87 408h1M103 408h1M135 408h2M139 408h1M459 408h1M495 408h1M511 408h1M561 408h1M38 409h1M70 409h2M87 409h1M104 409h1M134 409h1M139 409h1M459 409h1M494 409h1M496 409h2M511 409h1M560 409h1M38 410h1M68 410h2M88 410h1M104 410h1M132 410h2M140 410h1M458 410h1M494 410h1M498 410h1M510 410h1M560 410h1M39 411h1M66 411h2M88 411h1M105 411h1M131 411h1M141 411h1M457 411h1M493 411h1M499 411h2M510 411h1M559 411h1M39 412h1M64 412h2M89 412h1M106 412h1M129 412h2M141 412h1M457 412h1M492 412h1M501 412h2M509 412h1M559 412h1M40 413h1M62 413h2M89 413h1M106 413h1M128 413h1M142 413h1M456 413h1M492 413h1M503 413h1M509 413h1M558 413h1M40 414h1M60 414h2M90 414h1M106 414h2M126 414h2M143 414h1M455 414h1M491 414h1M504 414h2M508 414h1M558 414h1M40 415h1M58 415h2M90 415h1M104 415h2M108 415h1M124 415h2M144 415h1M454 415h1M490 415h1M506 415h1M508 415h1M558 415h1M41 416h1M56 416h2M91 416h1M103 416h1M108 416h1M123 416h1M144 416h1M454 416h1M490 416h1M507 416h1M557 416h1M41 417h1M54 417h2M91 417h1M101 417h2M109 417h1M121 417h2M145 417h1M453 417h1M489 417h1M507 417h1M557 417h1M42 418h1M52 418h2M92 418h1M99 418h2M110 418h1M120 418h1M146 418h1M452 418h1M488 418h1M506 418h1M556 418h1M42 419h1M50 419h2M93 419h1M98 419h1M110 419h1M118 419h2M147 419h1M451 419h1M488 419h1M505 419h1M556 419h1M43 420h1M48 420h2M93 420h1M96 420h2M111 420h1M117 420h1M148 420h1M450 420h1M487 420h1M505 420h1M555 420h1M43 421h1M46 421h2M94 421h2M111 421h1M115 421h2M149 421h1M449 421h1M487 421h1M504 421h1M555 421h1M44 422h2M94 422h1M112 422h1M114 422h1M149 422h1M449 422h1M486 422h1M504 422h1M554 422h1M44 423h1M95 423h1M112 423h1M150 423h1M448 423h1M486 423h1M503 423h1M554 423h1M44 424h1M95 424h1M113 424h1M151 424h1M447 424h1M485 424h1M503 424h1M554 424h1M45 425h1M96 425h1M114 425h1M152 425h1M446 425h1M484 425h2M502 425h1M553 425h1M45 426h1M97 426h1M115 426h1M153 426h1M445 426h1M483 426h1M486 426h2M501 426h1M553 426h1M46 427h1M97 427h1M116 427h1M153 427h1M445 427h1M482 427h1M488 427h1M501 427h1M552 427h1M46 428h1M98 428h1M116 428h1M154 428h1M444 428h1M482 428h1M489 428h2M500 428h1M552 428h1M47 429h1M99 429h1M117 429h1M155 429h1M443 429h1M481 429h1M491 429h2M499 429h1M551 429h1M47 430h1M100 430h1M117 430h2M156 430h1M442 430h1M480 430h1M493 430h1M498 430h1M551 430h1M48 431h1M100 431h1M115 431h2M119 431h1M157 431h1M441 431h1M479 431h1M494 431h2M498 431h1M550 431h1M48 432h1M101 432h1M114 432h1M119 432h1M158 432h1M440 432h1M479 432h1M496 432h2M550 432h1M49 433h1M102 433h1M113 433h1M120 433h1M159 433h1M439 433h1M478 433h1M496 433h2M549 433h1M49 434h1M102 434h1M111 434h2M121 434h1M160 434h1M438 434h1M477 434h1M496 434h1M498 434h2M549 434h1M50 435h1M103 435h1M110 435h1M122 435h1M161 435h1M437 435h1M476 435h1M495 435h1M500 435h1M548 435h1M50 436h1M104 436h1M109 436h1M122 436h1M162 436h1M436 436h1M476 436h1M494 436h1M501 436h2M548 436h1M51 437h1M105 437h1M107 437h2M123 437h1M163 437h1M435 437h1M475 437h1M493 437h1M503 437h1M547 437h1M51 438h1M105 438h2M124 438h1M164 438h1M434 438h1M474 438h1M493 438h1M504 438h2M547 438h1M52 439h1M106 439h1M125 439h1M165 439h1M433 439h1M473 439h1M492 439h1M506 439h1M546 439h1M52 440h1M107 440h1M126 440h1M166 440h1M432 440h1M472 440h1M491 440h1M507 440h2M546 440h1M53 441h1M107 441h1M126 441h1M167 441h1M431 441h1M472 441h2M491 441h1M509 441h1M545 441h1M54 442h1M108 442h1M127 442h1M168 442h1M430 442h1M471 442h1M474 442h1M490 442h1M510 442h2M544 442h1M54 443h1M109 443h1M128 443h1M169 443h1M429 443h1M470 443h1M475 443h2M489 443h1M512 443h1M544 443h1M55 444h1M110 444h1M129 444h1M170 444h1M428 444h2M469 444h1M477 444h1M488 444h1M513 444h2M543 444h1M56 445h1M110 445h1M130 445h1M171 445h2M426 445h2M430 445h1M468 445h1M478 445h1M488 445h1M515 445h1M542 445h1M56 446h1M111 446h1M129 446h1M131 446h1M173 446h1M425 446h1M431 446h1M467 446h1M479 446h1M487 446h1M516 446h2M542 446h1M57 447h1M112 447h1M128 447h1M131 447h1M174 447h1M424 447h1M432 447h1M467 447h1M480 447h2M486 447h1M518 447h1M541 447h1M57 448h1M113 448h1M126 448h2M132 448h1M175 448h1M423 448h1M432 448h1M466 448h1M482 448h1M485 448h1M519 448h2M541 448h1M58 449h1M114 449h1M125 449h1M133 449h1M176 449h1M421 449h2M433 449h1M465 449h1M483 449h2M521 449h1M540 449h1M59 450h1M114 450h1M124 450h1M134 450h1M177 450h2M420 450h1M434 450h1M464 450h1M484 450h1M522 450h2M539 450h1M59 451h1M115 451h1M123 451h1M135 451h1M179 451h1M419 451h1M435 451h1M463 451h1M483 451h1M524 451h1M539 451h1M60 452h1M116 452h1M121 452h2M136 452h1M180 452h1M418 452h1M436 452h1M462 452h1M482 452h1M525 452h2M538 452h1M61 453h1M117 453h1M120 453h1M137 453h1M181 453h1M417 453h1M437 453h1M461 453h1M481 453h1M527 453h1M537 453h1M61 454h1M118 454h2M138 454h1M182 454h2M415 454h2M438 454h1M460 454h1M480 454h1M528 454h2M537 454h1M62 455h1M119 455h1M139 455h1M184 455h1M414 455h1M438 455h1M459 455h1M479 455h1M530 455h1M536 455h1M63 456h1M119 456h1M140 456h1M185 456h1M413 456h1M439 456h1M458 456h1M460 456h1M479 456h1M531 456h2M535 456h1M63 457h1M120 457h1M141 457h1M186 457h2M411 457h2M440 457h1M457 457h1M461 457h1M478 457h1M533 457h1M535 457h1M64 458h1M121 458h1M142 458h1M188 458h1M410 458h1M441 458h1M456 458h1M462 458h1M477 458h1M534 458h1M65 459h1M122 459h1M143 459h1M189 459h2M408 459h2M442 459h1M455 459h1M463 459h1M476 459h1M533 459h1M65 460h1M123 460h1M142 460h1M144 460h1M191 460h1M407 460h1M443 460h1M454 460h1M464 460h2M475 460h1M533 460h1M66 461h1M124 461h1M141 461h1M145 461h1M192 461h2M405 461h2M444 461h1M453 461h1M466 461h1M474 461h1M532 461h1M67 462h1M125 462h1M140 462h1M146 462h1M194 462h2M403 462h2M444 462h1M452 462h1M467 462h1M473 462h1M531 462h1M67 463h1M125 463h1M139 463h1M147 463h1M196 463h1M402 463h1M445 463h1M451 463h1M468 463h1M473 463h1M531 463h1M68 464h1M126 464h1M138 464h1M148 464h1M197 464h2M400 464h2M446 464h1M450 464h1M469 464h1M472 464h1M530 464h1M68 465h1M127 465h1M138 465h1M149 465h1M199 465h1M399 465h1M447 465h1M449 465h1M471 465h1M530 465h1M69 466h1M128 466h1M137 466h1M150 466h1M200 466h2M397 466h2M448 466h1M470 466h1M529 466h1M70 467h1M129 467h1M136 467h1M151 467h1M202 467h1M395 467h2M446 467h2M469 467h1M528 467h1M71 468h1M130 468h1M135 468h1M152 468h2M203 468h2M393 468h2M445 468h1M468 468h1M527 468h1M71 469h1M131 469h1M134 469h1M154 469h1M205 469h2M391 469h2M444 469h1M446 469h1M467 469h1M527 469h1M72 470h1M132 470h1M155 470h1M207 470h2M389 470h2M443 470h1M447 470h1M466 470h1M526 470h1M73 471h1M133 471h1M156 471h1M209 471h2M387 471h2M442 471h1M448 471h1M465 471h1M525 471h1M74 472h1M134 472h1M157 472h1M211 472h2M385 472h2M440 472h2M448 472h1M464 472h1M524 472h1M74 473h1M135 473h1M157 473h3M213 473h2M383 473h2M439 473h1M449 473h1M462 473h2M524 473h1M75 474h1M136 474h2M156 474h1M160 474h1M215 474h2M381 474h2M438 474h1M450 474h1M461 474h1M523 474h1M76 475h1M138 475h1M155 475h1M161 475h1M217 475h2M379 475h2M437 475h1M451 475h1M460 475h1M522 475h1M77 476h1M139 476h1M155 476h1M162 476h2M219 476h3M377 476h2M435 476h2M452 476h1M459 476h1M521 476h1M78 477h1M140 477h1M154 477h1M164 477h1M222 477h2M375 477h2M434 477h1M452 477h1M458 477h1M520 477h1M79 478h1M141 478h1M153 478h1M165 478h1M224 478h2M373 478h2M433 478h1M453 478h1M457 478h1M519 478h1M80 479h1M142 479h2M152 479h1M166 479h2M226 479h3M370 479h3M431 479h2M454 479h3M518 479h1M81 480h1M144 480h1M151 480h1M168 480h1M229 480h3M367 480h3M430 480h1M454 480h1M517 480h1M82 481h1M145 481h1M151 481h1M169 481h1M232 481h3M364 481h3M429 481h2M453 481h1M516 481h1M83 482h1M146 482h1M150 482h1M170 482h1M232 482h1M235 482h3M361 482h3M427 482h2M431 482h1M452 482h1M515 482h1M84 483h1M147 483h1M149 483h1M171 483h2M232 483h1M238 483h3M358 483h3M426 483h1M431 483h1M451 483h1M514 483h1M84 484h1M148 484h1M173 484h1M231 484h1M241 484h4M354 484h4M425 484h1M432 484h1M449 484h2M514 484h1M85 485h1M149 485h2M173 485h2M231 485h1M245 485h3M351 485h3M424 485h1M433 485h1M448 485h1M513 485h1M86 486h1M151 486h1M172 486h1M175 486h2M230 486h1M248 486h3M348 486h3M422 486h2M434 486h1M447 486h1M512 486h1M87 487h1M152 487h1M172 487h1M177 487h2M230 487h1M251 487h3M345 487h3M420 487h2M434 487h1M446 487h1M511 487h1M87 488h1M153 488h2M171 488h1M179 488h2M230 488h1M254 488h4M341 488h4M418 488h2M435 488h1M444 488h2M511 488h1M88 489h1M155 489h1M170 489h1M181 489h1M229 489h1M258 489h5M336 489h5M344 489h1M417 489h1M436 489h1M443 489h1M510 489h1M89 490h1M156 490h1M170 490h1M182 490h2M229 490h1M263 490h6M329 490h7M344 490h1M415 490h2M437 490h1M442 490h1M509 490h1M90 491h1M157 491h2M169 491h1M184 491h1M229 491h1M269 491h7M323 491h6M345 491h1M414 491h1M437 491h1M440 491h2M508 491h1M91 492h1M159 492h1M169 492h1M185 492h2M228 492h1M276 492h7M316 492h7M345 492h1M412 492h3M438 492h2M507 492h1M92 493h1M160 493h2M168 493h1M187 493h1M228 493h1M283 493h33M345 493h1M411 493h1M415 493h1M437 493h2M506 493h1M93 494h1M162 494h1M167 494h1M188 494h2M227 494h1M345 494h1M409 494h2M415 494h1M436 494h1M505 494h1M94 495h1M163 495h1M167 495h1M190 495h2M227 495h1M346 495h1M407 495h2M416 495h1M435 495h1M504 495h1M95 496h1M164 496h3M189 496h1M192 496h2M227 496h1M346 496h1M405 496h2M417 496h1M433 496h2M503 496h1M96 497h1M165 497h2M189 497h1M194 497h2M226 497h1M346 497h1M403 497h2M417 497h1M432 497h1M502 497h1M97 498h1M164 498h1M167 498h2M188 498h1M196 498h2M226 498h1M346 498h1M401 498h2M418 498h1M430 498h2M501 498h1M98 499h1M164 499h1M169 499h1M187 499h1M198 499h2M225 499h1M346 499h1M399 499h2M418 499h1M429 499h1M500 499h1M99 500h1M163 500h1M170 500h1M187 500h1M200 500h2M225 500h1M347 500h1M397 500h2M419 500h1M428 500h1M499 500h1M100 501h1M162 501h1M171 501h2M186 501h1M202 501h2M225 501h1M347 501h1M395 501h3M420 501h1M426 501h2M498 501h1M101 502h1M162 502h1M173 502h1M186 502h1M204 502h2M224 502h1M347 502h1M393 502h2M397 502h1M420 502h1M425 502h1M497 502h1M102 503h1M161 503h1M174 503h2M185 503h1M206 503h2M224 503h1M347 503h1M391 503h2M398 503h1M421 503h1M423 503h2M496 503h1M103 504h1M160 504h1M176 504h2M184 504h1M207 504h3M224 504h1M347 504h1M389 504h2M398 504h1M421 504h2M495 504h1M104 505h1M160 505h1M178 505h2M184 505h1M207 505h1M210 505h2M223 505h1M348 505h1M387 505h2M399 505h1M419 505h2M494 505h1M105 506h1M159 506h1M180 506h1M183 506h1M206 506h1M212 506h2M223 506h1M348 506h1M385 506h2M399 506h1M418 506h1M493 506h1M106 507h1M158 507h1M181 507h2M206 507h1M214 507h3M222 507h1M348 507h1M381 507h4M400 507h1M416 507h2M492 507h1M107 508h1M158 508h1M183 508h2M205 508h1M217 508h4M222 508h1M348 508h1M377 508h4M400 508h1M414 508h2M491 508h1M108 509h1M157 509h1M185 509h2M205 509h1M221 509h4M349 509h1M374 509h3M379 509h1M400 509h1M412 509h2M490 509h1M109 510h1M156 510h1M187 510h1M204 510h1M225 510h2M349 510h1M372 510h2M379 510h1M401 510h1M410 510h2M489 510h1M110 511h1M156 511h1M188 511h2M204 511h1M226 511h3M349 511h1M370 511h2M380 511h1M401 511h1M408 511h2M487 511h2M111 512h2M155 512h1M190 512h2M204 512h1M226 512h1M229 512h3M349 512h1M366 512h4M380 512h1M402 512h1M406 512h2M486 512h1M113 513h1M154 513h1M192 513h2M203 513h1M225 513h1M232 513h4M349 513h1M362 513h4M380 513h1M402 513h1M404 513h2M485 513h1M114 514h1M154 514h1M194 514h3M203 514h1M225 514h1M236 514h4M350 514h1M359 514h3M381 514h1M402 514h2M483 514h2M115 515h2M153 515h1M197 515h2M202 515h1M224 515h1M240 515h4M350 515h1M355 515h4M360 515h1M381 515h1M400 515h2M403 515h1M482 515h1M117 516h1M152 516h1M199 516h2M202 516h1M224 516h1M244 516h3M350 516h5M360 516h1M381 516h1M398 516h2M404 516h1M481 516h1M118 517h1M152 517h1M201 517h2M223 517h1M244 517h1M247 517h4M347 517h4M360 517h1M382 517h1M395 517h3M404 517h1M480 517h1M119 518h1M151 518h1M203 518h2M223 518h1M244 518h1M251 518h4M343 518h4M361 518h1M382 518h1M393 518h2M405 518h1M479 518h1M120 519h1M150 519h1M205 519h2M223 519h1M243 519h1M255 519h4M339 519h4M361 519h1M382 519h1M391 519h2M405 519h1M478 519h1M121 520h1M150 520h1M207 520h2M222 520h1M243 520h1M259 520h6M334 520h5M341 520h1M361 520h1M383 520h1M389 520h2M406 520h1M477 520h1M122 521h1M149 521h1M209 521h3M222 521h1M243 521h1M264 521h8M326 521h8M341 521h1M361 521h1M383 521h1M387 521h2M406 521h1M476 521h1M123 522h1M148 522h1M212 522h2M221 522h1M243 522h1M264 522h1M272 522h16M310 522h16M341 522h1M362 522h1M384 522h3M407 522h1M475 522h1M124 523h1M148 523h1M214 523h3M221 523h1M242 523h1M264 523h1M283 523h1M288 523h22M321 523h1M342 523h1M362 523h1M382 523h2M407 523h1M474 523h1M125 524h1M147 524h1M217 524h3M242 524h1M264 524h1M283 524h1M302 524h1M321 524h1M342 524h1M362 524h1M379 524h3M408 524h1M472 524h2M126 525h2M146 525h1M220 525h4M242 525h1M263 525h1M283 525h1M302 525h1M321 525h1M342 525h1M362 525h1M375 525h4M408 525h1M471 525h1M128 526h1M146 526h1M224 526h3M242 526h1M263 526h1M283 526h1M302 526h1M322 526h1M342 526h1M363 526h1M372 526h3M409 526h1M470 526h1M129 527h1M145 527h1M227 527h2M241 527h1M263 527h1M283 527h1M302 527h1M322 527h1M342 527h1M363 527h1M369 527h3M409 527h1M468 527h2M130 528h2M144 528h1M229 528h3M241 528h1M263 528h1M283 528h1M302 528h1M322 528h1M342 528h1M363 528h1M367 528h2M410 528h1M467 528h1M132 529h1M144 529h1M232 529h4M241 529h1M263 529h1M283 529h1M302 529h1M322 529h1M343 529h1M363 529h4M410 529h1M466 529h1M133 530h2M143 530h1M236 530h4M263 530h1M282 530h1M302 530h1M322 530h1M343 530h1M359 530h4M411 530h1M464 530h2M135 531h1M142 531h1M240 531h4M262 531h1M282 531h1M302 531h1M322 531h1M343 531h1M354 531h5M411 531h1M462 531h2M136 532h2M142 532h1M244 532h4M262 532h1M282 532h1M302 532h1M323 532h1M343 532h1M350 532h4M412 532h1M461 532h1M138 533h2M141 533h1M248 533h6M262 533h1M282 533h1M302 533h1M323 533h1M344 533h6M412 533h1M459 533h2M140 534h1M254 534h6M262 534h1M282 534h1M302 534h1M323 534h1M338 534h6M413 534h1M458 534h1M141 535h2M260 535h4M282 535h1M302 535h1M323 535h1M334 535h4M413 535h1M456 535h2M143 536h1M264 536h6M282 536h1M302 536h1M328 536h6M414 536h1M455 536h1M144 537h2M270 537h17M302 537h1M311 537h17M414 537h1M453 537h2M146 538h1M282 538h1M287 538h24M415 538h1M452 538h1M147 539h2M282 539h1M415 539h1M450 539h2M149 540h1M282 540h1M416 540h1M449 540h1M150 541h2M282 541h1M416 541h1M447 541h2M152 542h1M282 542h1M417 542h1M445 542h2M153 543h2M282 543h1M417 543h1M444 543h1M155 544h2M282 544h1M418 544h1M442 544h2M157 545h1M282 545h1M418 545h1M441 545h1M158 546h2M281 546h1M419 546h1M439 546h2M160 547h2M281 547h1M419 547h1M437 547h2M162 548h2M281 548h1M420 548h1M435 548h2M164 549h2M281 549h1M420 549h1M433 549h2M166 550h2M281 550h1M421 550h1M431 550h2M168 551h2M281 551h1M421 551h1M429 551h2M170 552h2M281 552h1M422 552h1M427 552h2M172 553h2M281 553h1M422 553h1M425 553h2M174 554h3M281 554h1M422 554h3M177 555h2M281 555h1M420 555h2M179 556h2M281 556h1M418 556h2M181 557h2M281 557h1M416 557h2M183 558h3M281 558h1M413 558h3M186 559h2M281 559h1M411 559h2M188 560h2M280 560h1M409 560h2M190 561h2M280 561h1M407 561h2M192 562h3M280 562h1M404 562h3M195 563h2M280 563h1M402 563h2M197 564h2M280 564h1M400 564h2M199 565h2M280 565h1M398 565h2M201 566h3M280 566h1M395 566h3M204 567h3M280 567h1M391 567h4M207 568h4M280 568h1M388 568h3M211 569h3M280 569h1M385 569h3M214 570h3M280 570h1M382 570h3M217 571h3M280 571h1M379 571h3M220 572h3M280 572h1M376 572h3M223 573h3M280 573h1M372 573h4M226 574h4M279 574h1M369 574h3M230 575h4M279 575h1M365 575h4M234 576h4M279 576h1M361 576h4M238 577h5M279 577h1M356 577h5M243 578h5M279 578h1M351 578h5M248 579h7M279 579h1M343 579h8M255 580h10M279 580h1M333 580h10M265 581h10M279 581h1M323 581h10M275 582h10M313 582h10M285 583h28"/>
<path stroke="rgb(0,255,0)" stroke-width="1" fill="none" transform="translate(0,0.5)" d="M248 37h5M247 38h1M253 38h1M246 39h1M254 39h1M246 40h1M254 40h1M246 41h1M254 41h1M247 42h1M253 42h1M242 43h7M252 43h7M242 47h17M744 126h1M752 126h1M745 127h1M751 127h1M746 128h1M750 128h1M746 129h1M750 129h1M744 130h9M746 131h1M750 131h1M746 132h1M750 132h1M745 133h1M751 133h1M744 134h1M752 134h1M266 159h1M267 160h1M268 161h1M269 162h1M270 163h1M271 164h1M273 166h1M254 167h1M274 167h1M747 167h3M275 168h1M745 168h2M750 168h2M276 169h1M744 169h1M749 169h1M752 169h1M257 170h1M277 170h1M745 170h2M749 170h1M752 170h1M278 171h1M744 171h1M747 171h1M750 171h2M125 172h1M133 172h1M260 172h1M278 172h1M744 172h1M747 172h1M752 172h1M124 173h2M132 173h2M279 173h1M745 173h2M750 173h2M123 174h1M125 174h1M131 174h1M133 174h1M280 174h1M747 174h3M125 175h1M133 175h1M263 175h1M281 175h1M125 176h1M133 176h1M282 176h1M125 177h1M133 177h1M283 177h1M125 178h1M133 178h1M266 178h1M284 178h1M125 179h1M133 179h1M285 179h1M123 180h5M131 180h5M286 180h1M269 181h1M287 181h1M288 182h1M289 183h1M149 184h1M161 184h1M272 184h1M290 184h1M150 185h1M160 185h1M291 185h1M151 186h1M159 186h1M275 186h1M292 186h1M151 187h1M159 187h1M293 187h1M151 188h1M155 188h1M159 188h1M294 188h1M151 189h1M155 189h1M159 189h1M278 189h1M295 189h1M151 190h9M296 190h1M151 191h1M155 191h1M159 191h1M297 191h1M151 192h1M155 192h1M159 192h1M281 192h1M298 192h1M150 193h1M155 193h1M160 193h1M299 193h1M149 194h1M155 194h1M161 194h1M300 194h1M155 195h1M284 195h1M301 195h1M154 196h3M302 196h1M153 197h1M157 197h1M287 197h1M303 197h1M153 198h1M157 198h1M303 198h1M153 199h1M157 199h1M304 199h1M142 200h5M154 200h3M290 200h1M305 200h1M141 201h1M147 201h1M306 201h1M140 202h1M148 202h1M307 202h1M140 203h1M148 203h1M293 203h1M308 203h1M140 204h1M148 204h1M309 204h1M140 205h1M148 205h1M310 205h1M140 206h1M148 206h1M296 206h1M311 206h1M744 206h1M746 206h1M748 206h1M141 207h1M147 207h1M312 207h1M745 207h1M747 207h1M749 207h1M142 208h5M313 208h1M745 208h1M747 208h1M749 208h1M144 209h1M299 209h1M314 209h1M745 209h1M747 209h1M749 209h1M144 210h1M178 210h1M315 210h1M745 210h1M747 210h1M749 210h1M144 211h1M302 211h1M316 211h1M745 211h1M747 211h1M749 211h1M140 212h9M317 212h1M745 212h1M747 212h1M749 212h1M752 212h1M144 213h1M318 213h1M745 213h1M747 213h1M749 213h1M752 213h1M144 214h1M305 214h1M319 214h1M750 214h2M144 215h1M320 215h1M144 216h1M321 216h1M308 217h1M322 217h1M323 218h1M324 219h1M311 220h1M325 220h1M326 221h1M327 222h1M170 223h1M314 223h1M327 223h1M328 224h1M317 225h1M329 225h1M330 226h1M331 227h1M320 228h1M332 228h1M333 229h1M334 230h1M323 231h1M335 231h1M336 232h1M337 233h1M326 234h1M338 234h1M339 235h1M498 235h5M340 236h1M502 236h1M329 237h1M341 237h1M502 237h1M342 238h1M501 238h1M332 239h1M343 239h1M500 239h1M344 240h1M499 240h1M345 241h1M498 241h1M335 242h1M346 242h1M498 242h1M347 243h1M498 243h1M348 244h1M338 245h1M349 245h1M350 246h1M351 247h1M341 248h1M352 248h1M352 249h1M353 250h1M344 251h1M354 251h1M355 252h1M347 253h1M356 253h1M357 254h1M358 255h1M350 256h1M359 256h1M746 256h1M750 256h1M360 257h1M747 257h3M361 258h1M746 258h1M750 258h1M353 259h1M362 259h1M746 259h1M750 259h1M363 260h1M746 260h1M750 260h1M364 261h1M747 261h3M356 262h1M365 262h1M748 262h1M118 263h1M126 263h1M366 263h1M746 263h5M119 264h1M125 264h1M359 264h1M367 264h1M748 264h1M120 265h5M368 265h1M119 266h1M125 266h1M369 266h1M747 266h3M118 267h1M126 267h1M362 267h1M370 267h1M746 267h1M750 267h1M118 268h1M126 268h1M371 268h1M746 268h1M750 268h1M118 269h1M126 269h1M372 269h1M746 269h1M750 269h1M118 270h1M126 270h1M365 270h1M373 270h1M747 270h3M118 271h1M126 271h1M152 271h1M374 271h1M748 271h1M119 272h1M125 272h1M375 272h1M746 272h5M120 273h5M368 273h1M376 273h1M748 273h1M122 274h1M376 274h1M748 274h1M122 275h1M377 275h1M122 276h1M371 276h1M378 276h1M118 277h9M379 277h1M122 278h1M374 278h1M380 278h1M122 279h1M381 279h1M382 280h1M377 281h1M383 281h1M384 282h1M385 283h1M380 284h1M386 284h1M387 285h1M388 286h1M383 287h1M389 287h1M390 288h1M391 289h1M386 290h1M392 290h1M393 291h1M389 292h1M394 292h1M395 293h1M396 294h1M392 295h1M397 295h1M398 296h1M399 297h1M395 298h1M400 298h1M400 299h1M401 300h1M398 301h1M402 301h1M403 302h1M404 303h1M401 304h1M405 304h1M406 305h1M404 306h1M407 306h1M745 306h1M751 306h1M408 307h1M746 307h1M750 307h1M409 308h1M746 308h1M748 308h1M750 308h1M407 309h1M410 309h1M746 309h5M411 310h1M746 310h1M748 310h1M750 310h1M412 311h1M745 311h1M748 311h1M751 311h1M410 312h1M413 312h1M747 312h3M414 313h1M747 313h1M749 313h1M415 314h1M748 314h1M413 315h1M416 315h1M417 316h1M416 317h1M418 317h1M419 318h1M420 319h1M419 320h1M421 320h1M422 321h1M423 322h1M422 323h1M424 323h1M425 324h1M425 325h1M425 326h2M427 327h1M428 328h1M428 329h2M430 330h1M431 331h1M432 332h1M433 333h1M434 334h1M435 335h1M436 336h1M541 377h1M555 377h1M542 378h1M554 378h1M543 379h11M545 380h1M551 380h1M545 381h1M551 381h1M545 382h1M551 382h1M545 383h1M551 383h1M545 384h1M551 384h1M545 385h1M551 385h1M545 386h1M551 386h1M545 387h1M551 387h1M545 388h1M551 388h1M545 389h1M551 389h1M545 390h1M551 390h1M543 391h11M542 392h1M554 392h1M541 393h1M555 393h1M97 462h1M103 462h1M109 462h1M96 463h2M102 463h2M108 463h1M96 464h1M98 464h1M102 464h1M104 464h1M108 464h1M95 465h1M98 465h1M101 465h1M104 465h1M107 465h1M94 466h1M98 466h1M100 466h1M104 466h1M106 466h1M94 467h1M99 467h2M105 467h2M93 468h1M99 468h1M105 468h1M97 472h1M103 472h1M109 472h1M96 473h2M102 473h2M108 473h1M96 474h1M98 474h1M102 474h1M104 474h1M108 474h1M95 475h1M98 475h1M101 475h1M104 475h1M107 475h1M94 476h1M98 476h1M100 476h1M104 476h1M106 476h1M94 477h1M99 477h2M105 477h2M93 478h1M99 478h1M105 478h1M286 504h3M285 505h1M289 505h1M289 506h1M289 507h1M287 508h2M289 509h1M289 510h1M285 511h1M289 511h1M286 512h3"/>
<path stroke="rgb(255,255,0)" stroke-width="1" fill="none" transform="translate(0,0.5)" d="M377 43h1M381 43h1M385 43h1M378 44h1M380 44h1M382 44h1M384 44h1M386 44h1M379 45h1M383 45h1M387 45h1M391 45h1M379 46h1M383 46h1M387 46h1M390 46h2M379 47h1M383 47h1M387 47h1M389 47h1M391 47h1M379 48h1M383 48h1M387 48h2M391 48h1M379 49h1M383 49h1M387 49h1M391 49h1M379 50h1M383 50h1M387 50h1M391 50h1M379 51h1M383 51h1M387 51h1M391 51h1M379 52h1M383 52h1M387 52h1M391 52h1M379 53h1M383 53h1M387 53h1M391 53h1M379 54h1M383 54h1M387 54h1M391 54h1M379 55h1M383 55h1M387 55h1M391 55h1M379 56h1M383 56h1M388 56h1M390 56h1M379 57h1M383 57h1M389 57h1M388 58h1M390 58h1M387 59h1M391 59h1M198 109h1M205 109h3M197 110h2M204 110h1M208 110h1M196 111h1M198 111h1M204 111h1M208 111h1M198 112h1M204 112h1M208 112h1M277 112h1M198 113h1M204 113h1M208 113h1M277 113h1M198 114h1M204 114h1M208 114h1M273 114h9M198 115h1M204 115h1M208 115h1M277 115h1M198 116h1M204 116h1M208 116h1M250 116h1M258 116h1M262 116h4M277 116h1M746 116h1M749 116h1M752 116h1M196 117h5M205 117h3M250 117h2M257 117h2M261 117h1M266 117h1M277 117h1M745 117h2M748 117h2M751 117h1M250 118h1M252 118h1M256 118h1M258 118h1M261 118h1M266 118h1M277 118h1M281 118h3M745 118h1M747 118h2M750 118h2M250 119h1M253 119h1M255 119h1M258 119h1M261 119h1M277 119h1M280 119h1M284 119h1M744 119h1M747 119h1M750 119h1M250 120h1M254 120h1M258 120h1M261 120h1M277 120h3M285 120h1M250 121h1M254 121h1M258 121h1M261 121h1M277 121h1M285 121h1M746 121h1M749 121h1M752 121h1M250 122h1M254 122h1M258 122h1M261 122h1M277 122h1M285 122h1M745 122h2M748 122h2M751 122h1M250 123h1M254 123h1M258 123h1M261 123h1M277 123h1M284 123h1M745 123h1M747 123h2M750 123h2M250 124h1M254 124h1M258 124h1M261 124h1M277 124h1M283 124h1M744 124h1M747 124h1M750 124h1M250 125h1M254 125h1M258 125h1M261 125h1M277 125h1M283 125h1M250 126h1M254 126h1M258 126h1M261 126h1M277 126h1M283 126h1M250 127h1M254 127h1M258 127h1M261 127h1M284 127h1M250 128h1M254 128h1M258 128h1M261 128h1M285 128h1M250 129h1M254 129h1M258 129h1M261 129h1M250 130h1M254 130h1M258 130h1M261 130h1M266 130h1M250 131h1M254 131h1M258 131h1M261 131h1M266 131h1M250 132h1M254 132h1M258 132h1M262 132h4M287 150h1M265 153h1M288 156h2M745 156h1M752 156h1M746 157h6M747 158h1M750 158h1M747 159h1M750 159h1M263 160h1M747 160h1M750 160h1M259 161h1M747 161h1M750 161h1M747 162h1M750 162h1M255 163h1M746 163h6M745 164h1M752 164h1M747 198h3M746 199h1M750 199h1M746 200h1M750 200h1M744 201h4M749 201h4M744 203h9M183 214h1M181 217h1M179 220h1M178 223h1M158 271h1M158 272h1M157 275h2M157 278h1M157 279h1M157 281h1M156 283h1M156 284h1M156 287h1M156 290h1M155 293h1M155 296h1M747 296h1M745 297h5M747 298h1M155 299h1M747 299h1M749 299h2M747 300h2M751 300h1M747 301h1M751 301h1M747 302h1M750 302h1M747 303h1M750 303h1M751 304h1M503 338h3M502 339h1M506 339h1M35 340h1M41 340h1M45 340h3M502 340h1M34 341h2M41 341h1M44 341h1M48 341h1M502 341h1M33 342h1M35 342h1M41 342h1M43 342h1M49 342h1M502 342h4M35 343h1M40 343h1M42 343h1M49 343h1M502 343h1M506 343h1M35 344h1M39 344h1M43 344h1M49 344h1M502 344h1M506 344h1M35 345h1M39 345h1M44 345h1M48 345h1M502 345h1M506 345h1M35 346h1M39 346h1M45 346h1M47 346h1M503 346h3M35 347h1M39 347h1M46 347h1M35 348h1M39 348h1M47 348h1M36 349h1M38 349h1M48 349h1M37 350h1M49 350h1M37 351h1M49 351h1M37 352h1M49 352h1M37 353h1M49 353h1M37 354h1M49 354h1M48 355h1M47 356h1M168 460h3M167 461h1M171 461h1M171 462h1M171 463h1M170 464h1M169 465h1M168 466h1M167 467h1M167 468h5M464 489h1M476 489h1M465 490h1M475 490h1M466 491h1M474 491h1M467 492h1M473 492h1M468 493h5M467 494h1M473 494h1M466 495h1M474 495h1M465 496h1M475 496h1M464 497h1M476 497h1M464 498h1M476 498h1M464 499h1M476 499h1M464 500h1M476 500h1M464 501h1M476 501h1M465 502h1M475 502h1M466 503h1M474 503h1M467 504h1M473 504h1M468 505h5"/>
<path stroke="rgb(127,127,127)" stroke-width="1" fill="none" transform="translate(0,0.5)" d="M292 61h1M299 61h1M303 61h1M308 61h1M279 62h1M284 62h1M288 62h1M292 62h1M299 62h1M303 62h1M308 62h1M312 62h1M320 62h1M271 63h1M279 63h1M284 63h1M288 63h1M292 63h1M299 63h1M303 63h1M308 63h1M312 63h1M320 63h1M324 63h1M328 63h1M263 64h1M267 64h1M271 64h1M279 64h1M284 64h1M288 64h1M292 64h1M299 64h1M303 64h1M308 64h1M312 64h1M320 64h1M324 64h1M328 64h1M332 64h1M259 65h1M263 65h1M267 65h1M271 65h1M279 65h1M284 65h1M288 65h1M292 65h1M299 65h1M303 65h1M308 65h1M312 65h1M320 65h1M324 65h1M328 65h1M332 65h1M341 65h1M251 66h1M259 66h1M263 66h1M267 66h1M271 66h1M280 66h1M284 66h1M288 66h1M292 66h1M299 66h1M303 66h1M308 66h1M312 66h1M320 66h1M324 66h1M328 66h1M332 66h1M341 66h1M345 66h1M247 67h1M251 67h1M259 67h1M263 67h1M268 67h1M272 67h1M280 67h1M284 67h1M288 67h1M292 67h1M299 67h1M303 67h1M308 67h1M312 67h1M320 67h1M324 67h1M328 67h1M332 67h1M341 67h1M345 67h1M349 67h1M243 68h1M247 68h1M251 68h1M260 68h1M264 68h1M268 68h1M272 68h1M280 68h1M284 68h1M288 68h1M292 68h1M299 68h1M303 68h1M307 68h1M312 68h1M320 68h1M324 68h1M328 68h1M332 68h1M340 68h1M344 68h1M349 68h1M353 68h1M239 69h1M243 69h1M247 69h1M251 69h1M260 69h1M264 69h1M268 69h1M272 69h1M280 69h1M284 69h1M288 69h1M292 69h1M299 69h1M303 69h1M307 69h1M311 69h1M319 69h1M323 69h1M328 69h1M332 69h1M340 69h1M344 69h1M348 69h1M353 69h1M239 70h1M243 70h1M247 70h1M252 70h1M260 70h1M264 70h1M268 70h1M272 70h1M280 70h1M284 70h1M288 70h1M292 70h1M299 70h1M303 70h1M307 70h1M311 70h1M319 70h1M323 70h1M327 70h1M331 70h1M340 70h1M344 70h1M348 70h1M352 70h1M361 70h1M239 71h1M244 71h1M248 71h1M252 71h1M260 71h1M264 71h1M268 71h1M272 71h1M280 71h1M284 71h1M288 71h1M292 71h1M299 71h1M303 71h1M307 71h1M311 71h1M319 71h1M323 71h1M327 71h1M331 71h1M340 71h1M344 71h1M348 71h1M352 71h1M361 71h1M365 71h1M231 72h1M240 72h1M244 72h1M248 72h1M252 72h1M260 72h1M264 72h1M268 72h1M272 72h1M281 72h1M284 72h1M288 72h1M292 72h1M299 72h1M303 72h1M307 72h1M311 72h1M319 72h1M323 72h1M327 72h1M331 72h1M339 72h1M343 72h1M348 72h1M352 72h1M360 72h1M365 72h1M369 72h1M227 73h1M231 73h1M240 73h1M244 73h1M248 73h1M252 73h1M260 73h1M264 73h1M269 73h1M273 73h1M281 73h1M284 73h1M288 73h1M292 73h1M299 73h1M303 73h1M307 73h1M311 73h1M319 73h1M323 73h1M327 73h1M331 73h1M339 73h1M343 73h1M347 73h1M352 73h1M360 73h1M364 73h1M369 73h1M373 73h1M223 74h1M227 74h1M232 74h1M240 74h1M244 74h1M248 74h1M252 74h1M261 74h1M265 74h1M269 74h1M273 74h1M281 74h1M284 74h1M288 74h1M292 74h1M299 74h1M303 74h1M307 74h1M311 74h1M319 74h1M323 74h1M327 74h1M331 74h1M339 74h1M343 74h1M347 74h1M351 74h1M360 74h1M364 74h1M368 74h1M373 74h1M219 75h1M223 75h1M228 75h1M232 75h1M240 75h1M245 75h1M248 75h1M252 75h1M261 75h1M265 75h1M269 75h1M273 75h1M281 75h1M284 75h1M311 75h1M319 75h1M323 75h1M327 75h1M331 75h1M339 75h1M343 75h1M347 75h1M351 75h1M359 75h1M364 75h1M368 75h1M372 75h1M219 76h1M224 76h1M228 76h1M232 76h1M241 76h1M245 76h1M248 76h1M253 76h1M261 76h1M265 76h1M269 76h1M327 76h1M331 76h1M338 76h1M342 76h1M347 76h1M351 76h1M359 76h1M363 76h1M368 76h1M372 76h1M381 76h1M220 77h1M224 77h1M228 77h1M232 77h1M241 77h1M245 77h1M249 77h1M253 77h1M261 77h1M338 77h1M342 77h1M346 77h1M351 77h1M359 77h1M363 77h1M367 77h1M372 77h1M381 77h1M385 77h1M211 78h1M220 78h1M224 78h1M228 78h1M233 78h1M241 78h1M245 78h1M249 78h1M253 78h1M342 78h1M346 78h1M350 78h1M358 78h1M363 78h1M367 78h1M371 78h1M380 78h1M385 78h1M211 79h1M220 79h1M225 79h1M229 79h1M233 79h1M241 79h1M246 79h1M249 79h1M253 79h1M346 79h1M350 79h1M358 79h1M362 79h1M367 79h1M371 79h1M380 79h1M384 79h1M388 79h1M207 80h1M212 80h1M221 80h1M225 80h1M229 80h1M233 80h1M242 80h1M246 80h1M249 80h1M350 80h1M358 80h1M362 80h1M366 80h1M371 80h1M379 80h1M384 80h1M388 80h1M207 81h1M212 81h1M221 81h1M225 81h1M229 81h1M233 81h1M242 81h1M246 81h1M357 81h1M362 81h1M366 81h1M370 81h1M379 81h1M383 81h1M387 81h1M392 81h1M203 82h1M208 82h1M213 82h1M221 82h1M226 82h1M229 82h1M234 82h1M242 82h1M357 82h1M361 82h1M366 82h1M370 82h1M378 82h1M383 82h1M387 82h1M392 82h1M199 83h1M203 83h1M208 83h1M213 83h1M221 83h1M226 83h1M230 83h1M234 83h1M361 83h1M365 83h1M370 83h1M378 83h1M382 83h1M387 83h1M391 83h1M200 84h1M204 84h1M209 84h1M214 84h1M222 84h1M226 84h1M230 84h1M234 84h1M365 84h1M369 84h1M378 84h1M382 84h1M386 84h1M391 84h1M400 84h1M200 85h1M204 85h1M209 85h1M214 85h1M222 85h1M227 85h1M230 85h1M369 85h1M377 85h1M382 85h1M386 85h1M390 85h1M399 85h1M201 86h1M205 86h1M210 86h1M214 86h1M222 86h1M227 86h1M377 86h1M381 86h1M386 86h1M390 86h1M399 86h1M404 86h1M192 87h1M201 87h1M205 87h1M210 87h1M215 87h1M223 87h1M376 87h1M381 87h1M385 87h1M389 87h1M398 87h1M403 87h1M193 88h1M202 88h1M206 88h1M210 88h1M215 88h1M223 88h1M376 88h1M380 88h1M385 88h1M389 88h1M398 88h1M403 88h1M407 88h1M188 89h1M193 89h1M202 89h1M206 89h1M211 89h1M216 89h1M380 89h1M385 89h1M388 89h1M397 89h1M402 89h1M406 89h1M189 90h1M194 90h1M203 90h1M207 90h1M211 90h1M216 90h1M384 90h1M388 90h1M397 90h1M402 90h1M406 90h1M411 90h1M185 91h1M189 91h1M194 91h1M203 91h1M207 91h1M212 91h1M387 91h1M396 91h1M401 91h1M405 91h1M410 91h1M186 92h1M190 92h1M195 92h1M204 92h1M208 92h1M387 92h1M396 92h1M401 92h1M405 92h1M410 92h1M181 93h1M186 93h1M190 93h1M195 93h1M204 93h1M208 93h1M395 93h1M400 93h1M404 93h1M409 93h1M182 94h1M187 94h1M191 94h1M196 94h1M205 94h1M395 94h1M400 94h1M404 94h1M409 94h1M418 94h1M182 95h1M187 95h1M191 95h1M196 95h1M205 95h1M394 95h1M399 95h1M403 95h1M408 95h1M417 95h1M183 96h1M188 96h1M192 96h1M197 96h1M399 96h1M403 96h1M408 96h1M417 96h1M422 96h1M174 97h1M183 97h1M188 97h1M192 97h1M197 97h1M398 97h1M402 97h1M407 97h1M416 97h1M421 97h1M175 98h1M184 98h1M189 98h1M193 98h1M198 98h1M402 98h1M407 98h1M416 98h1M421 98h1M425 98h1M170 99h1M175 99h1M184 99h1M189 99h1M193 99h1M401 99h1M406 99h1M415 99h1M420 99h1M424 99h1M171 100h1M176 100h1M185 100h1M190 100h1M194 100h1M406 100h1M415 100h1M419 100h1M424 100h1M429 100h1M171 101h1M177 101h1M185 101h1M190 101h1M405 101h1M414 101h1M419 101h1M423 101h1M428 101h1M167 102h1M172 102h1M177 102h1M186 102h1M191 102h1M414 102h1M418 102h1M422 102h1M428 102h1M168 103h1M173 103h1M178 103h1M186 103h1M413 103h1M418 103h1M422 103h1M427 103h1M163 104h1M168 104h1M173 104h1M178 104h1M187 104h1M413 104h1M417 104h1M421 104h1M426 104h1M164 105h1M169 105h1M174 105h1M179 105h1M412 105h1M416 105h1M421 105h1M426 105h1M436 105h1M164 106h1M170 106h1M174 106h1M180 106h1M416 106h1M420 106h1M425 106h1M435 106h1M165 107h1M171 107h1M175 107h1M180 107h1M415 107h1M419 107h1M425 107h1M434 107h1M439 107h1M166 108h1M171 108h1M176 108h1M181 108h1M419 108h1M424 108h1M434 108h1M438 108h1M157 109h1M167 109h1M172 109h1M176 109h1M418 109h1M423 109h1M433 109h1M438 109h1M158 110h1M167 110h1M173 110h1M177 110h1M423 110h1M432 110h1M437 110h1M442 110h1M153 111h1M158 111h1M168 111h1M173 111h1M422 111h1M431 111h1M436 111h1M441 111h1M154 112h1M159 112h1M169 112h1M174 112h1M430 112h1M435 112h1M441 112h1M446 112h1M154 113h1M160 113h1M170 113h1M430 113h1M435 113h1M440 113h1M445 113h1M150 114h1M155 114h1M161 114h1M170 114h1M429 114h1M434 114h1M439 114h1M444 114h1M151 115h1M156 115h1M161 115h1M428 115h1M433 115h1M438 115h1M444 115h1M152 116h1M157 116h1M162 116h1M432 116h1M438 116h1M443 116h1M147 117h1M152 117h1M157 117h1M163 117h1M432 117h1M437 117h1M442 117h1M452 117h1M148 118h1M153 118h1M158 118h1M163 118h1M431 118h1M436 118h1M441 118h1M451 118h1M149 119h1M154 119h1M159 119h1M164 119h1M365 119h1M436 119h1M440 119h1M450 119h1M150 120h1M155 120h1M160 120h1M435 120h1M440 120h1M450 120h1M455 120h1M151 121h1M156 121h1M160 121h1M364 121h1M439 121h1M449 121h1M454 121h1M141 122h1M151 122h1M156 122h1M161 122h1M438 122h1M448 122h1M453 122h1M142 123h1M152 123h1M157 123h1M363 123h1M447 123h1M453 123h1M458 123h1M143 124h1M153 124h1M158 124h1M446 124h1M452 124h1M457 124h1M138 125h1M143 125h1M154 125h1M362 125h1M446 125h1M451 125h1M456 125h1M139 126h1M144 126h1M155 126h1M445 126h1M450 126h1M455 126h1M461 126h1M140 127h1M145 127h1M362 127h1M444 127h1M449 127h1M454 127h1M460 127h1M135 128h1M141 128h1M146 128h1M449 128h1M454 128h1M459 128h1M136 129h1M142 129h1M147 129h1M361 129h1M448 129h1M453 129h1M458 129h1M137 130h1M142 130h1M147 130h1M447 130h1M452 130h1M457 130h1M132 131h1M138 131h1M143 131h1M148 131h1M360 131h1M451 131h1M457 131h1M133 132h1M139 132h1M144 132h1M149 132h1M450 132h1M456 132h1M467 132h1M134 133h1M139 133h1M145 133h1M360 133h1M455 133h1M466 133h1M135 134h1M140 134h1M146 134h1M454 134h1M465 134h1M136 135h1M141 135h1M359 135h1M453 135h1M464 135h1M470 135h1M137 136h1M142 136h1M463 136h1M469 136h1M126 137h1M138 137h1M143 137h1M358 137h1M462 137h1M468 137h1M127 138h1M139 138h1M461 138h1M467 138h1M473 138h1M128 139h1M140 139h1M357 139h1M460 139h1M465 139h2M472 139h1M123 140h1M129 140h1M141 140h1M459 140h1M464 140h1M471 140h1M124 141h1M130 141h2M357 141h1M458 141h1M463 141h1M470 141h1M476 141h1M125 142h1M132 142h1M462 142h1M468 142h2M475 142h1M120 143h1M126 143h1M133 143h1M356 143h1M461 143h1M467 143h1M473 143h2M121 144h1M127 144h2M134 144h1M466 144h1M472 144h1M122 145h2M129 145h1M135 145h1M355 145h1M465 145h1M471 145h1M117 146h1M124 146h1M130 146h1M464 146h1M470 146h1M118 147h1M125 147h1M131 147h1M354 147h1M468 147h2M481 147h1M119 148h2M126 148h1M132 148h1M467 148h1M480 148h1M121 149h1M127 149h2M354 149h1M466 149h1M479 149h1M122 150h1M129 150h1M478 150h1M484 150h1M123 151h1M130 151h1M353 151h1M476 151h2M483 151h1M112 152h1M124 152h2M475 152h1M481 152h2M113 153h1M126 153h1M352 153h1M474 153h1M480 153h1M487 153h1M114 154h2M127 154h1M473 154h1M479 154h1M485 154h2M116 155h1M171 155h1M352 155h1M472 155h1M478 155h1M484 155h1M110 156h1M117 156h1M476 156h2M483 156h1M111 157h2M118 157h1M173 157h1M351 157h1M475 157h1M481 157h2M489 157h1M113 158h1M119 158h2M474 158h1M480 158h1M487 158h2M107 159h1M114 159h1M121 159h1M175 159h1M350 159h1M479 159h1M486 159h1M108 160h2M115 160h2M122 160h1M477 160h2M484 160h2M110 161h1M117 161h1M176 161h1M349 161h1M476 161h1M483 161h1M105 162h1M111 162h1M118 162h2M482 162h1M106 163h1M112 163h2M120 163h1M178 163h1M349 163h1M480 163h2M494 163h1M107 164h2M114 164h1M479 164h1M492 164h2M109 165h1M115 165h1M180 165h1M348 165h1M491 165h1M110 166h1M116 166h2M490 166h1M111 167h1M118 167h1M182 167h1M347 167h1M488 167h2M496 167h1M112 168h2M487 168h1M494 168h2M100 169h1M114 169h1M183 169h1M346 169h1M486 169h1M493 169h1M101 170h2M115 170h1M484 170h2M491 170h2M499 170h1M103 171h1M185 171h1M346 171h1M490 171h1M497 171h2M104 172h2M489 172h1M496 172h1M98 173h1M106 173h2M187 173h1M345 173h1M487 173h2M494 173h2M99 174h2M108 174h1M486 174h1M492 174h2M501 174h1M101 175h1M109 175h2M189 175h1M344 175h1M491 175h1M499 175h2M96 176h1M102 176h2M111 176h1M489 176h2M498 176h1M97 177h2M104 177h2M191 177h1M343 177h1M488 177h1M496 177h2M99 178h1M106 178h1M494 178h2M100 179h2M107 179h2M192 179h1M343 179h1M493 179h1M94 180h1M102 180h2M109 180h1M491 180h2M95 181h2M104 181h1M194 181h1M342 181h1M490 181h1M505 181h1M97 182h2M105 182h2M503 182h2M99 183h2M107 183h1M196 183h1M341 183h1M501 183h2M101 184h2M499 184h2M103 185h2M198 185h1M341 185h1M497 185h2M507 185h1M105 186h1M495 186h2M505 186h2M90 187h1M199 187h1M340 187h1M494 187h1M503 187h2M91 188h2M501 188h2M509 188h1M93 189h2M201 189h1M339 189h1M499 189h2M507 189h2M95 190h2M497 190h2M505 190h2M88 191h1M97 191h2M203 191h1M338 191h1M496 191h1M503 191h2M89 192h2M99 192h2M459 192h1M501 192h2M511 192h1M91 193h2M101 193h1M205 193h1M338 193h1M457 193h1M499 193h2M509 193h2M86 194h1M93 194h2M429 194h1M498 194h1M507 194h2M87 195h2M95 195h2M207 195h1M337 195h1M428 195h1M455 195h1M505 195h2M89 196h2M97 196h2M426 196h2M453 196h1M503 196h2M91 197h2M99 197h1M208 197h1M336 197h1M425 197h1M451 197h1M501 197h2M84 198h1M93 198h2M424 198h1M500 198h1M85 199h2M95 199h2M210 199h1M335 199h1M422 199h2M449 199h1M514 199h2M87 200h2M97 200h1M421 200h1M447 200h1M512 200h2M89 201h2M212 201h1M335 201h1M420 201h1M445 201h1M510 201h2M91 202h2M508 202h2M93 203h2M214 203h1M334 203h1M443 203h1M506 203h2M515 203h2M95 204h1M441 204h1M504 204h2M513 204h2M333 205h1M439 205h1M503 205h1M511 205h2M81 206h2M509 206h2M83 207h2M217 207h1M333 207h1M437 207h1M507 207h2M517 207h2M85 208h2M435 208h1M505 208h2M515 208h2M87 209h2M219 209h1M332 209h1M433 209h1M512 209h3M79 210h2M89 210h2M510 210h2M81 211h3M91 211h2M221 211h1M331 211h1M431 211h1M508 211h2M519 211h2M84 212h3M429 212h1M507 212h1M517 212h2M77 213h2M87 213h3M223 213h1M330 213h1M427 213h1M514 213h3M79 214h2M90 214h1M512 214h2M81 215h2M224 215h1M330 215h1M425 215h1M510 215h2M83 216h3M423 216h1M508 216h2M76 217h2M86 217h2M226 217h1M329 217h1M421 217h1M78 218h2M88 218h2M80 219h2M228 219h1M328 219h1M419 219h1M522 219h2M82 220h3M417 220h1M519 220h3M85 221h2M230 221h1M327 221h1M415 221h1M515 221h4M87 222h2M123 222h1M512 222h3M125 223h1M231 223h1M413 223h1M510 223h2M523 223h2M127 224h1M411 224h1M520 224h3M73 225h2M129 225h1M233 225h1M326 225h1M409 225h1M517 225h3M75 226h3M131 226h1M514 226h3M78 227h3M133 227h1M235 227h1M325 227h1M407 227h1M512 227h2M523 227h3M81 228h3M135 228h1M405 228h1M519 228h4M72 229h2M84 229h2M137 229h1M139 229h1M237 229h1M325 229h1M403 229h1M515 229h4M74 230h3M141 230h1M513 230h2M77 231h3M143 231h1M239 231h1M324 231h1M401 231h1M524 231h3M80 232h3M145 232h1M399 232h1M520 232h4M71 233h2M83 233h2M147 233h1M240 233h1M323 233h1M397 233h1M516 233h4M73 234h3M149 234h1M514 234h2M76 235h3M151 235h1M153 235h1M242 235h1M322 235h1M395 235h1M79 236h3M155 236h1M393 236h1M70 237h2M82 237h2M157 237h1M244 237h1M322 237h1M391 237h1M72 238h3M159 238h1M75 239h3M161 239h1M246 239h1M321 239h1M389 239h1M527 239h3M78 240h3M163 240h1M387 240h1M523 240h4M81 241h2M165 241h1M247 241h1M320 241h1M385 241h1M519 241h4M167 242h1M169 242h1M516 242h3M171 243h1M249 243h1M319 243h1M383 243h1M528 243h3M173 244h1M381 244h1M524 244h4M68 245h2M175 245h1M251 245h1M319 245h1M379 245h1M520 245h4M70 246h4M177 246h1M517 246h3M74 247h4M253 247h1M318 247h1M377 247h1M528 247h4M78 248h3M181 248h1M375 248h1M522 248h6M67 249h2M183 249h1M185 249h1M255 249h1M317 249h1M518 249h4M69 250h4M187 250h1M373 250h1M73 251h4M189 251h1M256 251h1M317 251h1M371 251h1M529 251h4M77 252h3M191 252h1M369 252h1M523 252h6M66 253h2M193 253h1M258 253h1M316 253h1M519 253h4M68 254h4M195 254h1M367 254h1M72 255h4M197 255h1M199 255h1M260 255h1M315 255h1M365 255h1M76 256h3M201 256h1M363 256h1M65 257h3M203 257h1M262 257h1M314 257h1M68 258h4M205 258h1M72 259h4M207 259h1M263 259h1M314 259h1M359 259h1M530 259h4M76 260h2M209 260h1M357 260h1M524 260h6M211 261h1M265 261h1M313 261h1M521 261h3M213 262h1M215 262h1M355 262h1M217 263h1M267 263h1M312 263h1M353 263h1M531 263h4M219 264h1M351 264h1M525 264h6M221 265h1M269 265h1M311 265h1M522 265h3M64 266h6M223 266h1M349 266h1M70 267h7M225 267h1M271 267h1M311 267h1M347 267h1M531 267h4M227 268h1M345 268h1M525 268h6M229 269h1M231 269h1M272 269h1M310 269h1M522 269h3M63 270h7M233 270h1M343 270h1M70 271h7M235 271h1M274 271h1M309 271h1M341 271h1M532 271h4M237 272h1M339 272h1M526 272h6M239 273h1M276 273h1M308 273h1M523 273h3M63 274h6M241 274h1M337 274h1M69 275h7M243 275h1M278 275h1M308 275h1M335 275h1M245 276h1M247 276h1M333 276h1M249 277h1M279 277h1M307 277h1M62 278h7M251 278h1M331 278h1M69 279h7M253 279h1M281 279h1M306 279h1M329 279h1M533 279h4M255 280h1M327 280h1M527 280h6M257 281h1M283 281h1M306 281h1M523 281h4M259 282h1M261 282h1M325 282h1M263 283h1M285 283h1M305 283h1M323 283h1M265 284h1M321 284h1M523 284h14M267 285h1M287 285h1M304 285h1M62 286h7M269 286h1M319 286h1M69 287h7M271 287h1M288 287h1M303 287h1M317 287h1M273 288h1M315 288h1M524 288h13M275 289h1M277 289h1M290 289h1M303 289h1M61 290h7M279 290h1M313 290h1M68 291h7M281 291h1M292 291h1M302 291h1M311 291h1M283 292h1M309 292h1M524 292h14M285 293h1M294 293h1M301 293h1M287 294h1M307 294h1M61 295h14M289 295h1M295 295h1M300 295h1M305 295h1M291 296h1M293 296h1M303 296h1M295 297h1M297 297h1M300 297h1M297 298h1M301 298h1M61 299h14M299 299h1M524 299h14M297 300h1M301 300h1M298 301h1M301 301h1M303 301h1M295 302h1M305 302h1M307 302h1M298 303h1M303 303h1M309 303h1M524 303h14M291 304h1M311 304h1M297 305h1M304 305h1M313 305h1M61 306h14M289 306h1M315 306h1M287 307h1M296 307h1M306 307h1M317 307h1M524 307h7M285 308h1M319 308h1M531 308h7M295 309h1M308 309h1M321 309h1M323 309h1M62 310h13M283 310h1M325 310h1M281 311h1M295 311h1M310 311h1M327 311h1M523 311h7M279 312h1M530 312h7M294 313h1M311 313h1M331 313h1M62 314h14M277 314h1M333 314h1M275 315h1M293 315h1M313 315h1M335 315h1M273 316h1M337 316h1M339 316h1M72 317h4M292 317h1M315 317h1M341 317h1M66 318h6M271 318h1M343 318h1M62 319h4M269 319h1M292 319h1M317 319h1M345 319h1M523 319h7M267 320h1M347 320h1M530 320h7M291 321h1M319 321h1M349 321h1M265 322h1M351 322h1M353 322h1M263 323h1M290 323h1M320 323h1M355 323h1M523 323h6M261 324h1M357 324h1M529 324h7M73 325h3M290 325h1M322 325h1M359 325h1M67 326h6M259 326h1M361 326h1M63 327h4M257 327h1M289 327h1M324 327h1M363 327h1M522 327h7M255 328h1M365 328h1M529 328h7M73 329h4M288 329h1M326 329h1M367 329h1M369 329h1M67 330h6M253 330h1M371 330h1M64 331h3M251 331h1M287 331h1M327 331h1M373 331h1M522 331h6M249 332h1M375 332h1M528 332h7M74 333h3M287 333h1M329 333h1M377 333h1M68 334h6M247 334h1M379 334h1M64 335h4M245 335h1M286 335h1M331 335h1M381 335h1M243 336h1M383 336h1M385 336h1M74 337h4M285 337h1M333 337h1M387 337h1M68 338h6M241 338h1M389 338h1M521 338h2M65 339h3M239 339h1M284 339h1M335 339h1M391 339h1M523 339h4M237 340h1M393 340h1M527 340h4M284 341h1M336 341h1M395 341h1M531 341h3M235 342h1M397 342h1M520 342h2M233 343h1M283 343h1M338 343h1M399 343h1M401 343h1M522 343h4M231 344h1M403 344h1M526 344h4M76 345h4M282 345h1M340 345h1M405 345h1M530 345h3M70 346h6M229 346h1M407 346h1M519 346h2M66 347h4M227 347h1M281 347h1M342 347h1M409 347h1M521 347h4M225 348h1M411 348h1M525 348h4M77 349h4M281 349h1M343 349h1M413 349h1M415 349h1M529 349h3M71 350h6M223 350h1M417 350h1M518 350h2M67 351h4M221 351h1M280 351h1M345 351h1M419 351h1M520 351h4M79 352h3M219 352h1M421 352h1M524 352h4M75 353h4M279 353h1M347 353h1M423 353h1M528 353h3M71 354h4M217 354h1M425 354h1M68 355h3M215 355h1M279 355h1M349 355h1M427 355h1M80 356h3M429 356h1M431 356h1M76 357h4M213 357h1M278 357h1M351 357h1M433 357h1M516 357h2M72 358h4M211 358h1M435 358h1M518 358h3M69 359h3M209 359h1M277 359h1M352 359h1M437 359h1M521 359h3M439 360h1M524 360h3M207 361h1M276 361h1M354 361h1M441 361h1M515 361h2M527 361h2M205 362h1M443 362h1M517 362h3M203 363h1M276 363h1M356 363h1M445 363h1M447 363h1M520 363h3M82 364h3M449 364h1M523 364h3M78 365h4M201 365h1M275 365h1M358 365h1M451 365h1M514 365h2M526 365h2M74 366h4M199 366h1M453 366h1M516 366h3M72 367h2M197 367h1M274 367h1M359 367h1M455 367h1M519 367h3M83 368h3M457 368h1M522 368h3M79 369h4M195 369h1M273 369h1M361 369h1M459 369h1M461 369h1M513 369h2M525 369h2M75 370h4M193 370h1M463 370h1M515 370h3M73 371h2M85 371h2M191 371h1M273 371h1M363 371h1M465 371h1M518 371h3M82 372h3M467 372h1M521 372h3M79 373h3M189 373h1M272 373h1M365 373h1M469 373h1M524 373h2M76 374h3M187 374h1M471 374h1M74 375h2M87 375h2M185 375h1M271 375h1M367 375h1M473 375h1M84 376h3M475 376h1M510 376h2M80 377h4M183 377h1M271 377h1M368 377h1M512 377h2M77 378h3M181 378h1M514 378h2M75 379h2M179 379h1M270 379h1M370 379h1M516 379h3M509 380h2M519 380h2M177 381h1M269 381h1M372 381h1M511 381h2M521 381h2M89 382h2M175 382h1M513 382h2M87 383h2M173 383h1M268 383h1M374 383h1M515 383h3M84 384h3M508 384h1M518 384h2M82 385h2M171 385h1M268 385h1M375 385h1M509 385h3M520 385h2M80 386h2M91 386h1M169 386h1M512 386h3M78 387h2M89 387h2M167 387h1M267 387h1M377 387h1M506 387h2M515 387h3M86 388h3M508 388h2M518 388h2M84 389h2M165 389h1M266 389h1M379 389h1M510 389h2M82 390h2M92 390h2M163 390h1M512 390h2M80 391h2M90 391h2M161 391h1M265 391h1M381 391h1M514 391h2M88 392h2M516 392h2M86 393h2M94 393h2M159 393h1M265 393h1M383 393h1M84 394h2M92 394h2M157 394h1M82 395h2M90 395h2M155 395h1M264 395h1M384 395h1M503 395h2M88 396h2M505 396h2M86 397h2M153 397h1M263 397h1M386 397h1M507 397h2M84 398h2M151 398h1M501 398h1M509 398h2M83 399h1M149 399h1M263 399h1M388 399h1M502 399h2M511 399h2M98 400h1M504 400h2M513 400h2M96 401h2M147 401h1M262 401h1M390 401h1M499 401h1M506 401h2M94 402h2M145 402h1M500 402h2M508 402h2M92 403h2M143 403h1M261 403h1M391 403h1M502 403h2M510 403h2M90 404h2M100 404h1M504 404h2M512 404h1M88 405h2M98 405h2M141 405h1M260 405h1M393 405h1M497 405h1M506 405h2M87 406h1M96 406h2M139 406h1M498 406h2M508 406h2M94 407h2M102 407h1M260 407h1M395 407h1M500 407h2M510 407h1M92 408h2M100 408h2M502 408h2M90 409h2M98 409h2M259 409h1M397 409h1M504 409h2M89 410h1M96 410h2M506 410h2M94 411h2M104 411h1M258 411h1M399 411h1M508 411h1M92 412h2M102 412h2M493 412h1M91 413h1M100 413h2M257 413h1M400 413h1M494 413h2M98 414h2M496 414h2M96 415h2M257 415h1M402 415h1M491 415h1M498 415h2M94 416h2M492 416h2M500 416h2M93 417h1M108 417h1M256 417h1M404 417h1M494 417h1M502 417h2M106 418h2M489 418h1M495 418h2M504 418h1M105 419h1M255 419h1M406 419h1M490 419h2M497 419h2M103 420h2M492 420h1M499 420h1M101 421h2M110 421h1M255 421h1M407 421h1M493 421h2M500 421h2M100 422h1M108 422h2M487 422h1M495 422h2M502 422h1M98 423h2M107 423h1M254 423h1M409 423h1M488 423h2M497 423h1M97 424h1M105 424h2M112 424h1M490 424h1M498 424h2M103 425h2M110 425h2M253 425h1M411 425h1M491 425h2M500 425h1M102 426h1M109 426h1M493 426h2M100 427h2M107 427h2M115 427h1M252 427h1M413 427h1M495 427h1M99 428h1M106 428h1M113 428h2M483 428h1M496 428h2M105 429h1M112 429h1M252 429h1M415 429h1M484 429h1M498 429h1M103 430h2M111 430h1M485 430h2M102 431h1M109 431h2M251 431h1M416 431h1M480 431h1M487 431h1M108 432h1M481 432h2M488 432h1M107 433h1M250 433h1M418 433h1M483 433h1M489 433h1M105 434h2M119 434h1M484 434h1M490 434h2M104 435h1M117 435h2M249 435h1M420 435h1M478 435h1M485 435h2M492 435h1M116 436h1M479 436h2M487 436h1M493 436h1M114 437h2M122 437h1M249 437h1M422 437h1M481 437h1M488 437h1M113 438h1M120 438h2M476 438h1M482 438h1M489 438h2M112 439h1M119 439h1M248 439h1M423 439h1M477 439h1M483 439h2M491 439h1M110 440h2M118 440h1M124 440h1M478 440h2M485 440h1M109 441h1M116 441h2M123 441h1M247 441h1M425 441h1M480 441h1M486 441h2M115 442h1M121 442h2M481 442h1M488 442h1M114 443h1M120 443h1M126 443h1M246 443h1M427 443h1M482 443h1M112 444h2M119 444h1M125 444h1M471 444h1M483 444h2M111 445h1M118 445h1M124 445h1M246 445h1M472 445h1M485 445h1M116 446h2M123 446h1M473 446h2M486 446h1M115 447h1M121 447h2M245 447h1M468 447h1M475 447h1M114 448h1M120 448h1M469 448h1M476 448h1M119 449h1M132 449h1M244 449h1M470 449h2M477 449h1M118 450h1M131 450h1M466 450h1M472 450h1M478 450h2M117 451h1M129 451h2M244 451h1M467 451h1M473 451h1M480 451h1M128 452h1M134 452h1M468 452h1M474 452h1M481 452h1M127 453h1M133 453h1M243 453h1M463 453h1M469 453h1M475 453h2M126 454h1M132 454h1M464 454h1M470 454h2M477 454h1M124 455h2M131 455h1M137 455h1M242 455h1M465 455h1M472 455h1M478 455h1M123 456h1M129 456h2M136 456h1M466 456h1M473 456h1M122 457h1M128 457h1M135 457h1M140 457h1M241 457h1M467 457h2M474 457h1M127 458h1M134 458h1M139 458h1M457 458h1M469 458h1M475 458h1M126 459h1M132 459h2M138 459h1M241 459h1M458 459h1M470 459h1M125 460h1M131 460h1M137 460h1M459 460h1M471 460h1M130 461h1M136 461h1M240 461h1M455 461h1M460 461h1M472 461h1M129 462h1M135 462h1M456 462h1M461 462h1M128 463h1M134 463h1M145 463h1M239 463h1M457 463h1M462 463h1M133 464h1M144 464h1M452 464h1M458 464h1M463 464h1M132 465h1M143 465h1M238 465h1M453 465h1M459 465h1M464 465h1M131 466h1M142 466h1M148 466h1M449 466h1M454 466h1M459 466h1M465 466h1M141 467h1M147 467h1M238 467h1M450 467h1M455 467h1M460 467h1M466 467h1M141 468h1M146 468h1M151 468h1M451 468h1M456 468h1M461 468h1M140 469h1M145 469h1M150 469h1M237 469h1M451 469h1M456 469h1M462 469h1M139 470h1M144 470h1M149 470h1M452 470h1M457 470h1M463 470h1M138 471h1M144 471h1M149 471h1M154 471h1M236 471h1M453 471h1M458 471h1M137 472h1M143 472h1M148 472h1M153 472h1M443 472h1M454 472h1M459 472h1M142 473h1M147 473h1M152 473h1M236 473h1M444 473h1M455 473h1M460 473h1M141 474h1M146 474h1M152 474h1M440 474h1M445 474h1M455 474h1M140 475h1M145 475h1M151 475h1M235 475h1M441 475h1M446 475h1M456 475h1M145 476h1M150 476h1M160 476h1M437 476h1M442 476h1M447 476h1M457 476h1M144 477h1M149 477h1M159 477h1M234 477h1M438 477h1M442 477h1M447 477h1M143 478h1M148 478h1M158 478h1M163 478h1M438 478h1M443 478h1M448 478h1M148 479h1M158 479h1M162 479h1M233 479h1M434 479h1M439 479h1M444 479h1M449 479h1M147 480h1M157 480h1M162 480h1M167 480h1M435 480h1M440 480h1M445 480h1M450 480h1M146 481h1M156 481h1M161 481h1M166 481h1M435 481h1M441 481h1M446 481h1M451 481h1M155 482h1M160 482h1M166 482h1M436 482h1M441 482h1M446 482h1M154 483h1M159 483h1M165 483h1M170 483h1M427 483h1M437 483h1M442 483h1M447 483h1M154 484h1M159 484h1M164 484h1M169 484h1M428 484h1M438 484h1M443 484h1M448 484h1M153 485h1M158 485h1M163 485h1M168 485h1M428 485h1M438 485h1M444 485h1M152 486h1M157 486h1M163 486h1M168 486h1M424 486h1M429 486h1M439 486h1M444 486h1M157 487h1M162 487h1M167 487h1M176 487h1M425 487h1M430 487h1M440 487h1M445 487h1M156 488h1M161 488h1M166 488h1M175 488h1M421 488h1M425 488h1M431 488h1M440 488h1M160 489h1M165 489h1M175 489h1M180 489h1M422 489h1M426 489h1M431 489h1M441 489h1M160 490h1M164 490h1M174 490h1M179 490h1M417 490h1M422 490h1M427 490h1M432 490h1M159 491h1M164 491h1M173 491h1M179 491h1M183 491h1M418 491h1M423 491h1M428 491h1M433 491h1M163 492h1M173 492h1M178 492h1M182 492h1M418 492h1M424 492h1M428 492h1M434 492h1M162 493h1M172 493h1M177 493h1M182 493h1M186 493h1M419 493h1M424 493h1M429 493h1M434 493h1M172 494h1M177 494h1M181 494h1M185 494h1M411 494h1M420 494h1M425 494h1M430 494h1M435 494h1M171 495h1M176 495h1M180 495h1M185 495h1M412 495h1M420 495h1M425 495h1M430 495h1M170 496h1M176 496h1M180 496h1M184 496h1M407 496h1M412 496h1M421 496h1M426 496h1M431 496h1M170 497h1M175 497h1M179 497h1M184 497h1M193 497h1M408 497h1M413 497h1M421 497h1M427 497h1M169 498h1M174 498h1M179 498h1M183 498h1M192 498h1M404 498h1M408 498h1M413 498h1M422 498h1M427 498h1M174 499h1M178 499h1M183 499h1M192 499h1M197 499h1M405 499h1M409 499h1M414 499h1M423 499h1M428 499h1M173 500h1M177 500h1M182 500h1M191 500h1M196 500h1M400 500h1M405 500h1M409 500h1M414 500h1M423 500h1M177 501h1M182 501h1M191 501h1M196 501h1M200 501h1M401 501h1M406 501h1M410 501h1M415 501h1M424 501h1M176 502h1M181 502h1M190 502h1M195 502h1M199 502h1M401 502h1M406 502h1M410 502h1M415 502h1M181 503h1M190 503h1M195 503h1M199 503h1M203 503h1M393 503h1M402 503h1M407 503h1M411 503h1M416 503h1M180 504h1M189 504h1M194 504h1M198 504h1M203 504h1M394 504h1M402 504h1M407 504h1M411 504h1M416 504h1M189 505h1M194 505h1M198 505h1M202 505h1M390 505h1M394 505h1M403 505h1M408 505h1M412 505h1M417 505h1M188 506h1M193 506h1M197 506h1M202 506h1M211 506h1M390 506h1M395 506h1M403 506h1M408 506h1M412 506h1M188 507h1M193 507h1M197 507h1M201 507h1M211 507h1M386 507h1M391 507h1M395 507h1M404 507h1M409 507h1M413 507h1M187 508h1M192 508h1M196 508h1M201 508h1M210 508h1M214 508h1M382 508h1M387 508h1M391 508h1M396 508h1M404 508h1M409 508h1M192 509h1M196 509h1M200 509h1M210 509h1M213 509h1M218 509h1M382 509h1M387 509h1M392 509h1M396 509h1M405 509h1M410 509h1M191 510h1M195 510h1M200 510h1M209 510h1M213 510h1M218 510h1M222 510h1M375 510h1M383 510h1M388 510h1M392 510h1M397 510h1M405 510h1M195 511h1M199 511h1M209 511h1M213 511h1M217 511h1M222 511h1M375 511h1M383 511h1M388 511h1M393 511h1M397 511h1M406 511h1M194 512h1M199 512h1M208 512h1M212 512h1M217 512h1M221 512h1M371 512h1M376 512h1M384 512h1M389 512h1M393 512h1M398 512h1M198 513h1M208 513h1M212 513h1M216 513h1M221 513h1M229 513h1M368 513h1M371 513h1M376 513h1M384 513h1M389 513h1M394 513h1M398 513h1M198 514h1M207 514h1M212 514h1M216 514h1M220 514h1M229 514h1M233 514h1M364 514h1M368 514h1M372 514h1M376 514h1M385 514h1M389 514h1M394 514h1M399 514h1M207 515h1M211 515h1M215 515h1M220 515h1M228 515h1M233 515h1M237 515h1M364 515h1M369 515h1M372 515h1M377 515h1M385 515h1M390 515h1M395 515h1M399 515h1M206 516h1M211 516h1M215 516h1M219 516h1M228 516h1M232 516h1M237 516h1M241 516h1M356 516h1M365 516h1M369 516h1M372 516h1M377 516h1M385 516h1M390 516h1M395 516h1M206 517h1M211 517h1M215 517h1M219 517h1M228 517h1M232 517h1M236 517h1M241 517h1M352 517h1M356 517h1M365 517h1M369 517h1M373 517h1M377 517h1M386 517h1M391 517h1M210 518h1M214 518h1M219 518h1M227 518h1M232 518h1M236 518h1M240 518h1M248 518h1M349 518h1M352 518h1M356 518h1M365 518h1M369 518h1M373 518h1M377 518h1M386 518h1M391 518h1M210 519h1M214 519h1M218 519h1M227 519h1M231 519h1M236 519h1M240 519h1M248 519h1M252 519h1M345 519h1M349 519h1M352 519h1M357 519h1M365 519h1M370 519h1M373 519h1M378 519h1M387 519h1M213 520h1M218 520h1M227 520h1M231 520h1M235 520h1M240 520h1M247 520h1M252 520h1M256 520h1M345 520h1M349 520h1M353 520h1M357 520h1M366 520h1M370 520h1M374 520h1M378 520h1M387 520h1M213 521h1M217 521h1M226 521h1M231 521h1M235 521h1M239 521h1M247 521h1M251 521h1M256 521h1M260 521h1M337 521h1M345 521h1M349 521h1M353 521h1M357 521h1M366 521h1M370 521h1M374 521h1M378 521h1M217 522h1M226 522h1M230 522h1M235 522h1M239 522h1M247 522h1M251 522h1M255 522h1M260 522h1M267 522h1M271 522h1M329 522h1M333 522h1M337 522h1M345 522h1M350 522h1M353 522h1M357 522h1M366 522h1M370 522h1M374 522h1M379 522h1M226 523h1M230 523h1M234 523h1M239 523h1M247 523h1M251 523h1M255 523h1M259 523h1M267 523h1M271 523h1M275 523h1M279 523h1M287 523h1M314 523h1M317 523h1M325 523h1M329 523h1M333 523h1M337 523h1M346 523h1M350 523h1M353 523h1M358 523h1M366 523h1M371 523h1M375 523h1M379 523h1M225 524h1M230 524h1M234 524h1M238 524h1M246 524h1M251 524h1M255 524h1M259 524h1M267 524h1M271 524h1M275 524h1M279 524h1M287 524h1M291 524h1M295 524h1M299 524h1M306 524h1M310 524h1M314 524h1M317 524h1M325 524h1M329 524h1M333 524h1M338 524h1M346 524h1M350 524h1M354 524h1M358 524h1M367 524h1M371 524h1M375 524h1M225 525h1M229 525h1M234 525h1M238 525h1M246 525h1M250 525h1M255 525h1M259 525h1M267 525h1M271 525h1M275 525h1M279 525h1M287 525h1M291 525h1M295 525h1M299 525h1M306 525h1M310 525h1M314 525h1M317 525h1M325 525h1M330 525h1M334 525h1M338 525h1M346 525h1M350 525h1M354 525h1M358 525h1M367 525h1M371 525h1M229 526h1M233 526h1M238 526h1M246 526h1M250 526h1M254 526h1M259 526h1M267 526h1M271 526h1M275 526h1M279 526h1M287 526h1M291 526h1M295 526h1M299 526h1M306 526h1M310 526h1M314 526h1M317 526h1M326 526h1M330 526h1M334 526h1M338 526h1M346 526h1M350 526h1M354 526h1M358 526h1M367 526h1M233 527h1M237 527h1M246 527h1M250 527h1M254 527h1M258 527h1M267 527h1M271 527h1M275 527h1M279 527h1M287 527h1M291 527h1M295 527h1M299 527h1M306 527h1M310 527h1M314 527h1M318 527h1M326 527h1M330 527h1M334 527h1M338 527h1M346 527h1M350 527h1M354 527h1M359 527h1M237 528h1M245 528h1M250 528h1M254 528h1M258 528h1M266 528h1M271 528h1M275 528h1M279 528h1M287 528h1M291 528h1M295 528h1M299 528h1M306 528h1M310 528h1M314 528h1M318 528h1M326 528h1M330 528h1M334 528h1M338 528h1M346 528h1M351 528h1M355 528h1M359 528h1M245 529h1M249 529h1M254 529h1M258 529h1M266 529h1M270 529h1M274 529h1M279 529h1M287 529h1M291 529h1M295 529h1M299 529h1M306 529h1M310 529h1M314 529h1M318 529h1M326 529h1M330 529h1M334 529h1M338 529h1M347 529h1M351 529h1M355 529h1M359 529h1M245 530h1M249 530h1M253 530h1M258 530h1M266 530h1M270 530h1M274 530h1M278 530h1M286 530h1M291 530h1M295 530h1M299 530h1M306 530h1M310 530h1M314 530h1M318 530h1M326 530h1M330 530h1M334 530h1M339 530h1M347 530h1M351 530h1M355 530h1M249 531h1M253 531h1M257 531h1M266 531h1M270 531h1M274 531h1M278 531h1M286 531h1M290 531h1M295 531h1M299 531h1M306 531h1M310 531h1M314 531h1M318 531h1M326 531h1M331 531h1M335 531h1M339 531h1M347 531h1M351 531h1M253 532h1M257 532h1M266 532h1M270 532h1M274 532h1M278 532h1M286 532h1M290 532h1M295 532h1M299 532h1M306 532h1M310 532h1M314 532h1M318 532h1M327 532h1M331 532h1M335 532h1M339 532h1M347 532h1M257 533h1M266 533h1M270 533h1M274 533h1M278 533h1M286 533h1M290 533h1M295 533h1M299 533h1M306 533h1M310 533h1M314 533h1M319 533h1M327 533h1M331 533h1M335 533h1M339 533h1M266 534h1M270 534h1M274 534h1M278 534h1M286 534h1M290 534h1M295 534h1M299 534h1M306 534h1M310 534h1M314 534h1M319 534h1M327 534h1M331 534h1M335 534h1M270 535h1M274 535h1M278 535h1M286 535h1M290 535h1M295 535h1M299 535h1M306 535h1M310 535h1M314 535h1M319 535h1M327 535h1M278 536h1M286 536h1M290 536h1M295 536h1M299 536h1M306 536h1M310 536h1M314 536h1M319 536h1M290 537h1M295 537h1M299 537h1M306 537h1"/>
<path stroke="rgb(255,0,0)" stroke-width="1" fill="none" transform="translate(0,0.5)" d="M310 86h3M309 87h1M313 87h1M309 88h1M313 88h1M309 89h1M313 89h1M310 90h4M313 91h1M313 92h1M309 93h1M313 93h1M310 94h3M745 106h1M748 106h1M750 106h2M744 107h2M748 107h2M752 107h1M745 108h1M747 108h1M750 108h1M752 108h1M745 109h1M747 109h1M751 109h1M745 110h1M747 110h1M752 110h1M303 111h1M746 111h1M752 111h1M302 112h1M746 112h1M752 112h1M292 113h2M301 113h1M746 113h1M752 113h1M294 114h1M301 114h1M751 114h1M295 115h1M301 115h1M295 116h1M301 116h1M295 117h1M301 117h1M294 118h1M301 118h1M294 119h1M301 119h1M293 120h1M301 120h1M495 120h5M293 121h1M301 121h1M494 121h1M500 121h1M292 122h1M301 122h1M493 122h1M501 122h1M292 123h1M301 123h1M492 123h1M502 123h1M291 124h1M301 124h1M491 124h1M503 124h1M291 125h15M491 125h1M503 125h1M301 126h1M491 126h1M503 126h1M301 127h1M491 127h1M503 127h1M491 128h1M503 128h1M492 129h1M502 129h1M493 130h1M501 130h1M493 131h1M501 131h1M489 132h1M493 132h1M501 132h1M490 133h1M492 133h1M502 133h1M491 134h1M503 134h1M504 135h1M505 136h1M745 146h1M751 146h1M746 147h1M750 147h1M747 148h3M746 149h1M750 149h1M288 150h1M745 150h1M751 150h1M745 151h1M751 151h1M745 152h1M751 152h1M746 153h1M750 153h1M747 154h3M286 159h1M265 160h1M281 162h1M283 162h1M264 163h1M251 165h1M279 165h1M281 165h1M250 166h1M262 166h1M250 167h1M249 168h1M276 168h1M278 168h1M249 169h1M260 169h1M248 170h1M248 171h1M273 171h1M275 171h1M247 172h1M259 172h1M247 173h1M246 174h1M270 174h1M272 174h1M246 175h1M245 176h1M245 177h1M268 177h2M244 178h1M255 178h1M244 179h1M243 180h1M265 180h1M267 180h1M243 181h1M254 181h1M242 182h1M242 183h1M262 183h1M264 183h1M241 184h1M252 184h1M241 185h1M240 186h1M259 186h1M261 186h1M744 186h1M746 186h1M748 186h1M240 187h1M250 187h1M745 187h1M747 187h1M749 187h1M751 187h1M239 188h1M745 188h1M747 188h1M749 188h3M239 189h1M257 189h2M745 189h1M747 189h1M749 189h1M751 189h1M238 190h1M248 190h1M745 190h1M747 190h1M749 190h1M751 190h1M238 191h1M745 191h1M747 191h1M749 191h1M751 191h1M237 192h1M254 192h2M745 192h1M747 192h1M749 192h1M751 192h1M237 193h1M247 193h1M745 193h1M747 193h1M750 193h1M236 194h1M749 194h1M751 194h1M236 195h1M251 195h2M235 196h1M245 196h1M235 197h1M234 198h1M248 198h1M250 198h1M234 199h1M243 199h1M233 200h1M233 201h1M245 201h1M247 201h1M232 202h1M242 202h1M232 203h1M231 204h1M243 204h2M55 205h5M231 205h1M240 205h1M58 206h2M230 206h1M57 207h1M59 207h1M230 207h1M240 207h2M56 208h1M59 208h1M229 208h1M238 208h1M55 209h1M59 209h1M229 209h1M54 210h1M228 210h1M237 210h2M45 211h1M53 211h1M228 211h1M237 211h1M46 212h1M52 212h1M227 212h1M47 213h1M51 213h1M227 213h1M234 213h1M236 213h1M48 214h1M50 214h1M226 214h1M235 214h1M49 215h1M226 215h1M48 216h1M50 216h1M225 216h1M232 216h2M47 217h1M51 217h1M225 217h1M233 217h1M46 218h1M52 218h1M224 218h1M45 219h1M53 219h1M224 219h1M229 219h2M44 220h1M223 220h1M232 220h1M43 221h1M223 221h1M222 222h1M226 222h2M222 223h1M230 223h1M221 224h1M221 225h1M223 225h2M220 226h1M228 226h1M220 227h1M219 228h1M221 228h2M219 229h1M226 229h1M218 230h1M218 231h2M217 232h1M225 232h1M217 233h1M215 234h2M216 235h1M223 235h1M215 236h1M747 236h3M212 237h2M215 237h1M745 237h2M750 237h2M214 238h1M221 238h1M745 238h1M751 238h1M214 239h1M744 239h1M752 239h1M209 240h2M213 240h1M744 240h1M748 240h1M752 240h1M213 241h1M220 241h1M744 241h1M752 241h1M212 242h1M745 242h1M751 242h1M207 243h1M212 243h1M745 243h2M750 243h2M211 244h1M218 244h1M747 244h3M211 245h1M204 246h2M210 246h1M210 247h1M216 247h1M209 248h1M201 249h2M209 249h1M208 250h1M215 250h1M208 251h1M198 252h2M207 252h1M207 253h1M213 253h1M206 254h1M196 255h1M206 255h1M205 256h1M211 256h1M205 257h1M193 258h1M204 258h1M204 259h1M209 259h1M203 260h1M190 261h2M203 261h1M202 262h1M208 262h1M202 263h1M187 264h2M201 264h1M201 265h1M206 265h1M200 266h1M185 267h1M200 267h1M199 268h1M204 268h1M199 269h1M182 270h1M198 270h1M198 271h1M203 271h1M197 272h1M179 273h1M197 273h1M196 274h1M201 274h1M196 275h1M177 276h1M195 276h1M750 276h3M195 277h1M199 277h1M751 277h2M194 278h1M750 278h1M752 278h1M173 279h2M194 279h1M746 279h2M749 279h1M193 280h1M198 280h1M745 280h1M748 280h1M118 281h5M193 281h1M744 281h1M749 281h1M116 282h2M123 282h2M171 282h1M192 282h1M744 282h1M749 282h1M115 283h1M125 283h1M192 283h1M196 283h1M745 283h1M748 283h1M114 284h1M126 284h1M191 284h1M746 284h2M113 285h1M127 285h1M168 285h1M191 285h1M113 286h1M127 286h1M190 286h1M194 286h1M751 286h1M112 287h1M128 287h1M150 287h1M190 287h1M745 287h2M750 287h1M112 288h1M128 288h1M165 288h1M189 288h1M747 288h1M750 288h1M112 289h1M120 289h1M128 289h1M189 289h1M193 289h1M747 289h1M750 289h1M112 290h1M128 290h1M188 290h1M746 290h1M750 290h1M112 291h1M128 291h1M162 291h1M188 291h1M746 291h1M750 291h1M113 292h1M127 292h1M187 292h1M191 292h1M745 292h1M750 292h1M113 293h1M127 293h1M187 293h1M745 293h8M114 294h1M126 294h1M160 294h1M186 294h1M750 294h1M115 295h1M125 295h1M186 295h1M189 295h1M116 296h2M123 296h2M185 296h1M118 297h5M157 297h1M185 297h1M184 298h1M187 298h1M113 299h1M149 299h1M184 299h1M112 300h1M114 300h1M183 300h1M111 301h1M115 301h1M183 301h1M186 301h1M111 302h1M115 302h1M182 302h1M111 303h1M115 303h1M182 303h1M111 304h1M115 304h1M181 304h1M184 304h1M111 305h1M115 305h1M119 305h2M125 305h2M181 305h1M111 306h1M115 306h1M118 306h1M121 306h1M124 306h1M127 306h1M180 306h1M111 307h1M115 307h1M118 307h1M124 307h1M180 307h1M182 307h1M111 308h5M118 308h1M124 308h1M179 308h1M111 309h1M115 309h1M119 309h1M124 309h1M179 309h1M111 310h1M115 310h1M120 310h1M124 310h1M178 310h1M181 310h1M111 311h1M115 311h1M121 311h1M124 311h1M178 311h1M111 312h1M115 312h1M121 312h1M124 312h1M177 312h1M111 313h1M115 313h1M121 313h1M124 313h1M177 313h1M179 313h1M111 314h1M115 314h1M118 314h1M121 314h1M124 314h1M127 314h1M176 314h1M111 315h1M115 315h1M119 315h2M125 315h2M176 315h1M175 316h1M177 316h1M175 317h1M174 318h1M174 319h1M176 319h1M173 320h1M173 321h1M172 322h1M174 322h1M172 323h1M171 324h1M171 325h2M170 326h1M170 327h1M169 328h2M169 329h1M168 330h1M168 331h2M167 332h1M167 333h1M166 334h2M166 335h1M165 336h1M165 337h1M164 338h1M164 339h1M163 340h2M163 341h1M162 342h1M157 345h1M131 346h6M135 347h2M134 348h1M136 348h1M133 349h1M136 349h1M132 350h1M136 350h1M131 351h1M136 351h1M123 352h5M130 352h1M122 353h1M128 353h2M121 354h1M129 354h1M98 355h1M120 355h1M130 355h1M97 356h2M120 356h1M130 356h1M96 357h1M98 357h1M120 357h1M130 357h1M98 358h1M120 358h1M130 358h1M98 359h1M120 359h1M130 359h1M98 360h1M121 360h1M129 360h1M98 361h1M122 361h1M128 361h1M98 362h1M123 362h5M96 363h5M467 418h5M467 419h1M467 420h1M467 421h1M467 422h4M471 423h1M471 424h1M467 425h1M471 425h1M468 426h3M342 549h3M352 549h3M341 550h1M345 550h1M351 550h1M355 550h1M340 551h1M346 551h1M350 551h1M356 551h1M340 552h1M346 552h1M350 552h1M356 552h1M340 553h1M346 553h1M350 553h1M356 553h1M341 554h1M346 554h1M350 554h1M355 554h1M342 555h1M346 555h1M350 555h1M354 555h1M347 556h1M349 556h1M348 557h1M348 558h1M348 559h1M348 560h1M348 561h1M348 562h1M348 563h1M348 564h1M348 565h1"/>
<path stroke="rgb(0,0,255)" stroke-width="1" fill="none" transform="translate(0,0.5)" d="M120 93h1M124 93h1M128 93h1M121 94h1M123 94h1M125 94h1M127 94h1M129 94h1M122 95h1M126 95h1M130 95h1M122 96h1M126 96h1M130 96h1M122 97h1M126 97h1M130 97h1M122 98h1M126 98h1M130 98h1M122 99h1M126 99h1M130 99h1M122 100h1M126 100h1M130 100h1M122 101h1M126 101h1M130 101h1M122 102h1M126 102h1M130 102h1M122 103h1M126 103h1M130 103h1M122 104h1M126 104h1M130 104h1M135 104h1M122 105h1M126 105h1M130 105h1M134 105h3M122 106h1M126 106h1M130 106h1M135 106h1M122 107h1M126 107h1M130 107h1M135 107h1M131 108h1M134 108h1M132 109h2M232 122h1M237 122h3M244 122h1M232 123h1M236 123h1M240 123h1M244 123h1M232 124h1M236 124h1M240 124h1M244 124h1M232 125h1M236 125h1M240 125h1M244 125h1M232 126h1M237 126h3M244 126h1M233 127h1M243 127h1M233 128h1M243 128h1M234 129h2M241 129h2M236 130h5M428 130h3M238 131h1M427 131h1M431 131h1M238 132h1M427 132h1M431 132h1M238 133h1M427 133h1M431 133h1M234 134h9M428 134h3M238 135h1M427 135h1M431 135h1M238 136h1M427 136h1M431 136h1M745 136h2M750 136h2M238 137h1M427 137h1M431 137h1M744 137h1M747 137h1M749 137h1M752 137h1M238 138h1M428 138h3M744 138h1M747 138h1M749 138h1M752 138h1M745 139h1M747 139h1M749 139h1M751 139h1M748 140h1M748 141h1M748 142h1M748 143h1M748 144h1M249 158h1M747 176h3M746 177h1M750 177h1M745 178h1M751 178h1M745 179h1M751 179h1M745 180h1M751 180h1M746 181h1M750 181h1M744 182h1M746 182h1M750 182h1M745 183h1M751 183h1M752 184h1M750 216h3M751 217h2M750 218h1M752 218h1M745 219h1M749 219h1M746 220h1M748 220h1M747 221h1M746 222h1M748 222h1M745 223h1M749 223h1M744 224h1M555 243h5M120 244h1M126 244h1M132 244h1M552 244h3M560 244h1M120 245h1M126 245h1M132 245h1M551 245h1M561 245h3M119 246h3M124 246h5M131 246h3M550 246h1M560 246h1M564 246h1M746 246h3M120 247h1M126 247h1M132 247h1M549 247h1M559 247h1M565 247h1M745 247h1M749 247h2M120 248h1M126 248h1M132 248h1M559 248h1M565 248h1M746 248h1M751 248h1M121 249h1M126 249h1M131 249h1M551 249h3M559 249h1M565 249h1M747 249h1M751 249h1M121 250h1M126 250h1M131 250h1M550 250h1M554 250h1M560 250h1M564 250h1M747 250h1M751 250h1M122 251h2M126 251h1M129 251h2M549 251h1M555 251h1M561 251h3M747 251h1M751 251h1M90 252h1M97 252h3M124 252h5M549 252h1M555 252h1M746 252h1M750 252h2M89 253h2M96 253h1M100 253h1M126 253h1M549 253h1M555 253h1M565 253h1M745 253h1M749 253h2M88 254h1M90 254h1M100 254h1M126 254h1M550 254h1M554 254h1M564 254h1M746 254h3M90 255h1M100 255h1M126 255h1M551 255h3M563 255h1M90 256h1M99 256h1M122 256h9M554 256h1M560 256h3M90 257h1M98 257h1M126 257h1M555 257h5M90 258h1M97 258h1M126 258h1M90 259h1M96 259h1M126 259h1M88 260h5M96 260h5M126 260h1M152 270h1M161 272h1M164 272h1M161 273h1M164 273h1M167 273h1M167 274h1M170 274h1M170 275h1M173 275h1M176 275h1M176 276h1M179 276h1M179 277h1M182 277h1M185 277h1M182 278h1M185 278h1M188 278h1M188 279h1M191 279h1M191 280h1M194 280h1M197 280h1M197 281h1M200 281h1M200 282h1M203 282h1M206 282h1M206 283h1M209 283h1M209 284h1M212 284h1M215 284h1M212 285h1M215 285h1M218 285h1M218 286h1M221 286h1M221 287h1M224 287h1M227 287h1M227 288h1M230 288h1M230 289h1M233 289h1M236 289h1M236 290h1M239 290h1M239 291h1M242 291h1M242 292h1M245 292h1M248 292h1M248 293h1M251 293h1M251 294h1M254 294h1M257 294h1M257 295h1M260 295h1M260 296h1M263 296h1M266 297h1M269 297h1M269 298h1M272 298h1M272 299h1M275 299h1M278 299h1M278 300h1M281 300h1M281 301h1M284 301h1M287 302h1M290 302h1M290 303h1M293 303h1M296 304h1M299 304h1M299 305h1M302 305h1M302 306h1M305 306h1M308 306h1M308 307h1M311 307h1M311 308h1M314 308h1M317 309h1M320 309h1M320 310h1M323 310h1M326 311h1M329 311h1M329 312h1M332 312h1M332 313h1M335 313h1M338 314h1M341 314h1M341 315h1M344 315h1M347 316h1M350 316h1M745 316h1M748 316h1M751 316h1M350 317h1M353 317h1M744 317h2M747 317h3M751 317h2M356 318h1M745 318h1M748 318h1M751 318h1M359 319h1M362 319h1M746 319h1M748 319h1M750 319h1M362 320h1M365 320h1M747 320h3M368 321h1M371 321h1M748 321h1M371 322h1M374 322h1M746 322h5M377 323h1M748 323h1M380 324h1M383 324h1M748 324h1M386 325h1M389 326h1M392 326h1M745 326h1M748 326h1M751 326h1M392 327h1M395 327h1M745 327h1M747 327h1M749 327h1M751 327h1M398 328h1M401 328h1M745 328h1M748 328h1M751 328h1M401 329h1M404 329h1M746 329h1M750 329h1M407 330h1M747 330h3M410 331h1M413 331h1M748 331h1M416 332h1M746 332h5M419 333h1M422 333h1M748 333h1M422 334h1M425 334h1M748 334h1M428 335h1M431 336h1M434 336h1M437 337h1M443 339h1M468 339h5M467 340h1M473 340h2M466 341h1M475 341h1M467 342h1M476 342h1M468 343h1M477 343h1M469 344h1M477 344h1M469 345h1M478 345h1M470 346h1M478 346h1M470 347h1M478 347h1M470 348h1M478 348h1M469 349h1M478 349h1M469 350h1M477 350h1M468 351h1M477 351h1M467 352h1M476 352h1M466 353h1M475 353h1M467 354h1M473 354h2M468 355h5M394 481h1M397 481h1M394 482h1M397 482h1M394 483h1M397 483h1M394 484h1M397 484h1M394 485h5M397 486h1M397 487h1M397 488h1M397 489h1M205 539h1M221 539h1M206 540h1M220 540h1M207 541h1M219 541h1M208 542h1M218 542h1M208 543h1M218 543h1M209 544h1M217 544h1M209 545h1M217 545h1M209 546h1M217 546h1M205 547h17M209 548h1M217 548h1M209 549h1M217 549h1M209 550h1M217 550h1M208 551h1M218 551h1M208 552h1M218 552h1M207 553h1M219 553h1M206 554h1M220 554h1M205 555h1M221 555h1"/>
<path stroke="rgb(0,255,255)" stroke-width="1" fill="none" transform="translate(0,0.5)" d="M287 156h1M287 157h1M284 158h1M284 159h1M281 160h1M281 161h1M278 162h1M278 163h1M251 164h1M275 164h1M250 165h1M272 165h1M275 165h1M249 166h1M248 167h2M269 167h1M272 167h1M248 168h1M269 168h1M247 169h1M266 169h1M246 170h1M266 170h1M245 171h1M263 171h1M244 172h1M263 172h1M243 173h2M260 173h1M242 174h1M260 174h1M241 175h2M257 175h1M241 176h2M257 176h1M240 177h1M254 177h1M239 178h1M254 178h1M238 179h2M251 179h1M237 180h1M251 180h1M236 181h1M248 181h1M235 182h1M237 182h1M245 182h1M234 183h2M245 183h1M234 184h1M242 184h1M233 185h1M235 185h1M242 185h1M232 186h1M239 186h1M231 187h1M239 187h1M230 188h1M232 188h1M236 188h1M229 189h1M236 189h1M228 190h2M233 190h1M228 191h1M230 191h1M233 191h1M227 192h1M230 192h1M226 193h1M230 193h1M225 194h1M227 194h2M224 195h1M223 196h2M222 197h2M226 197h1M221 198h2M221 199h1M218 200h1M220 200h1M223 200h1M215 201h1M219 201h1M215 202h1M218 202h1M212 203h1M217 203h1M221 203h1M212 204h1M216 204h2M209 205h1M215 205h2M209 206h1M214 206h2M219 206h1M206 207h1M214 207h1M213 208h1M203 209h1M212 209h1M216 209h1M211 210h1M200 211h1M210 211h2M209 212h2M214 212h1M197 213h1M208 213h2M208 214h1M194 215h1M207 215h1M212 215h1M206 216h1M183 217h1M191 217h1M205 217h1M188 218h1M204 218h1M209 218h1M188 219h1M203 219h2M182 220h1M185 220h1M202 220h2M201 221h2M207 221h1M182 222h1M201 222h1M182 223h1M200 223h1M179 224h1M199 224h1M205 224h1M198 225h1M176 226h1M181 226h1M197 226h2M196 227h2M202 227h1M195 228h2M181 229h1M195 229h1M194 230h1M200 230h1M193 231h1M180 232h1M192 232h1M191 233h2M198 233h1M190 234h2M180 235h1M189 235h2M188 236h2M195 236h1M188 237h1M179 238h1M187 238h1M186 239h1M193 239h1M185 240h2M179 241h1M184 241h2M183 242h2M191 242h1M182 243h2M178 244h1M181 244h2M181 245h1M188 245h1M180 246h1M178 247h3M178 248h2M186 248h1M177 249h2M176 250h2M175 251h2M184 251h1M175 252h1M174 253h1M177 253h1M173 254h1M181 254h1M172 255h2M171 256h2M176 256h1M170 257h2M179 257h1M169 258h2M168 259h2M176 259h1M168 260h1M177 260h1M167 261h1M166 262h2M175 262h1M165 263h2M175 263h1M164 264h2M163 265h2M175 265h1M162 266h2M172 266h1M161 267h2M161 268h1M174 268h1M160 269h2M170 269h1M159 270h2M159 271h1M174 271h1M168 272h1M173 274h1M165 275h1M173 277h1M163 278h1M172 280h1M161 281h1M172 283h1M158 284h1M171 286h1M171 289h1M170 292h1M170 295h1M169 298h1M169 301h1M168 304h1M168 307h1M167 310h1M167 313h1M166 316h1M166 319h1M165 322h1M165 325h1M164 328h1M164 331h1M163 334h1M163 337h1M162 340h1M162 343h1"/>
<path stroke="rgb(0,127,127)" stroke-width="1" fill="none" transform="translate(0,0.5)" d="M437 178h5M436 179h1M442 179h1M435 180h1M443 180h1M434 181h1M444 181h1M433 182h1M445 182h1M433 183h1M445 183h1M433 184h1M445 184h1M433 185h1M445 185h1M433 186h1M445 186h1M434 187h1M444 187h1M435 188h1M443 188h1M435 189h1M443 189h1M433 190h3M443 190h3M432 191h1M435 191h1M443 191h1M446 191h1M431 192h1M435 192h1M443 192h1M447 192h1M432 193h1M434 193h1M444 193h1M446 193h1M433 194h1M445 194h1M415 205h1M747 336h3M746 337h1M750 337h1M745 338h1M751 338h1M745 339h1M751 339h1M745 340h1M751 340h1M746 341h1M750 341h1M745 342h2M750 342h2M744 343h1M746 343h1M750 343h1M752 343h1M745 344h1M751 344h1"/>
</svg>
<div id="side">
<div><span class="w">Astrolog 5.40</span></div>
<div>&quot;joan&quot;</div>
<div>Sun December 21, 1980</div>
<div> 7:00am (ST +8:00 GMT)</div>
<div>&quot;Taipei&quot;</div>
<div>121°31E 25°03N</div>
<div>Placidus houses.</div>
<div>Tropical, Geocentric.</div>
<div>Julian Day = 2444594.4583</div>
<div> </div>
<div><span class="r"> 1st house: </span><span class="y"> 4Cap10</span></div>
<div><span class="y"> 2nd house: </span><span class="G"> 7Aqu51</span></div>
<div><span class="G"> 3rd house: </span><span class="b">13Pis56</span></div>
<div><span class="b"> 4th house: </span><span class="r">17Ari34</span></div>
<div><span class="r"> 5th house: </span><span class="y">15Tau59</span></div>
<div><span class="y"> 6th house: </span><span class="G">10Gem32</span></div>
<div><span class="G"> 7th house: </span><span class="b"> 4Can10</span></div>
<div><span class="b"> 8th house: </span><span class="r"> 7Leo51</span></div>
<div><span class="r"> 9th house: </span><span class="y">13Vir56</span></div>
<div><span class="y">10th house: </span><span class="G">17Lib34</span></div>
<div><span class="G">11th house: </span><span class="b">15Sco59</span></div>
<div><span class="b">12th house: </span><span class="r">10Sag32</span></div>
<div> </div>
<div><span class="r"> Sun: </span><span class="r">29Sag14</span><span class="w"> </span> <span class="l">- 0°00'</span></div>
<div><span class="b">Moon: </span><span class="G">18Gem31</span><span class="w"> </span> <span class="l">- 4°06'</span></div>
<div><span class="G">Merc: </span><span class="r">23Sag21</span><span class="w"> </span> <span class="l">- 0°53'</span></div>
<div><span class="G">Venu: </span><span class="r"> 3Sag21</span><span class="w"> </span> <span class="l">+ 1°17'</span></div>
<div><span class="r">Mars: </span><span class="y">22Cap13</span><span class="w"> </span> <span class="l">- 1°08'</span></div>
<div><span class="r">Jupi: </span><span class="G"> 8Lib32</span><span class="w"> </span> <span class="l">+ 1°16'</span></div>
<div><span class="y">Satu: </span><span class="G"> 9Lib03</span><span class="w"> </span> <span class="l">+ 2°18'</span></div>
<div><span class="G">Uran: </span><span class="b">27Sco50</span><span class="w"> </span> <span class="l">+ 0°13'</span></div>
<div><span class="b">Nept: </span><span class="r">22Sag39</span><span class="w"> </span> <span class="l">+ 1°18'</span></div>
<div><span class="b">Plut: </span><span class="G">23Lib58</span><span class="w"> </span> <span class="l">+16°54'</span></div>
<div><span class="C">Node: </span><span class="r">13Leo06</span><span class="w">R</span> <span class="l">+ 0°00'</span></div>
<div> </div>
<div>Fire: 5, Earth: 2,</div>
<div>Air : 5, Water: 1</div>
<div>Car: 6, Fix: 2, Mut: 5</div>
<div>Yang: 10, Yin: 3</div>
<div>M: 9, N: 2, A: 7, D: 4</div>
<div>Ang: 2, Suc: 3, Cad: 6</div>
<div>Learn: 2, Share: 11</div>
</div>
</body></html>
